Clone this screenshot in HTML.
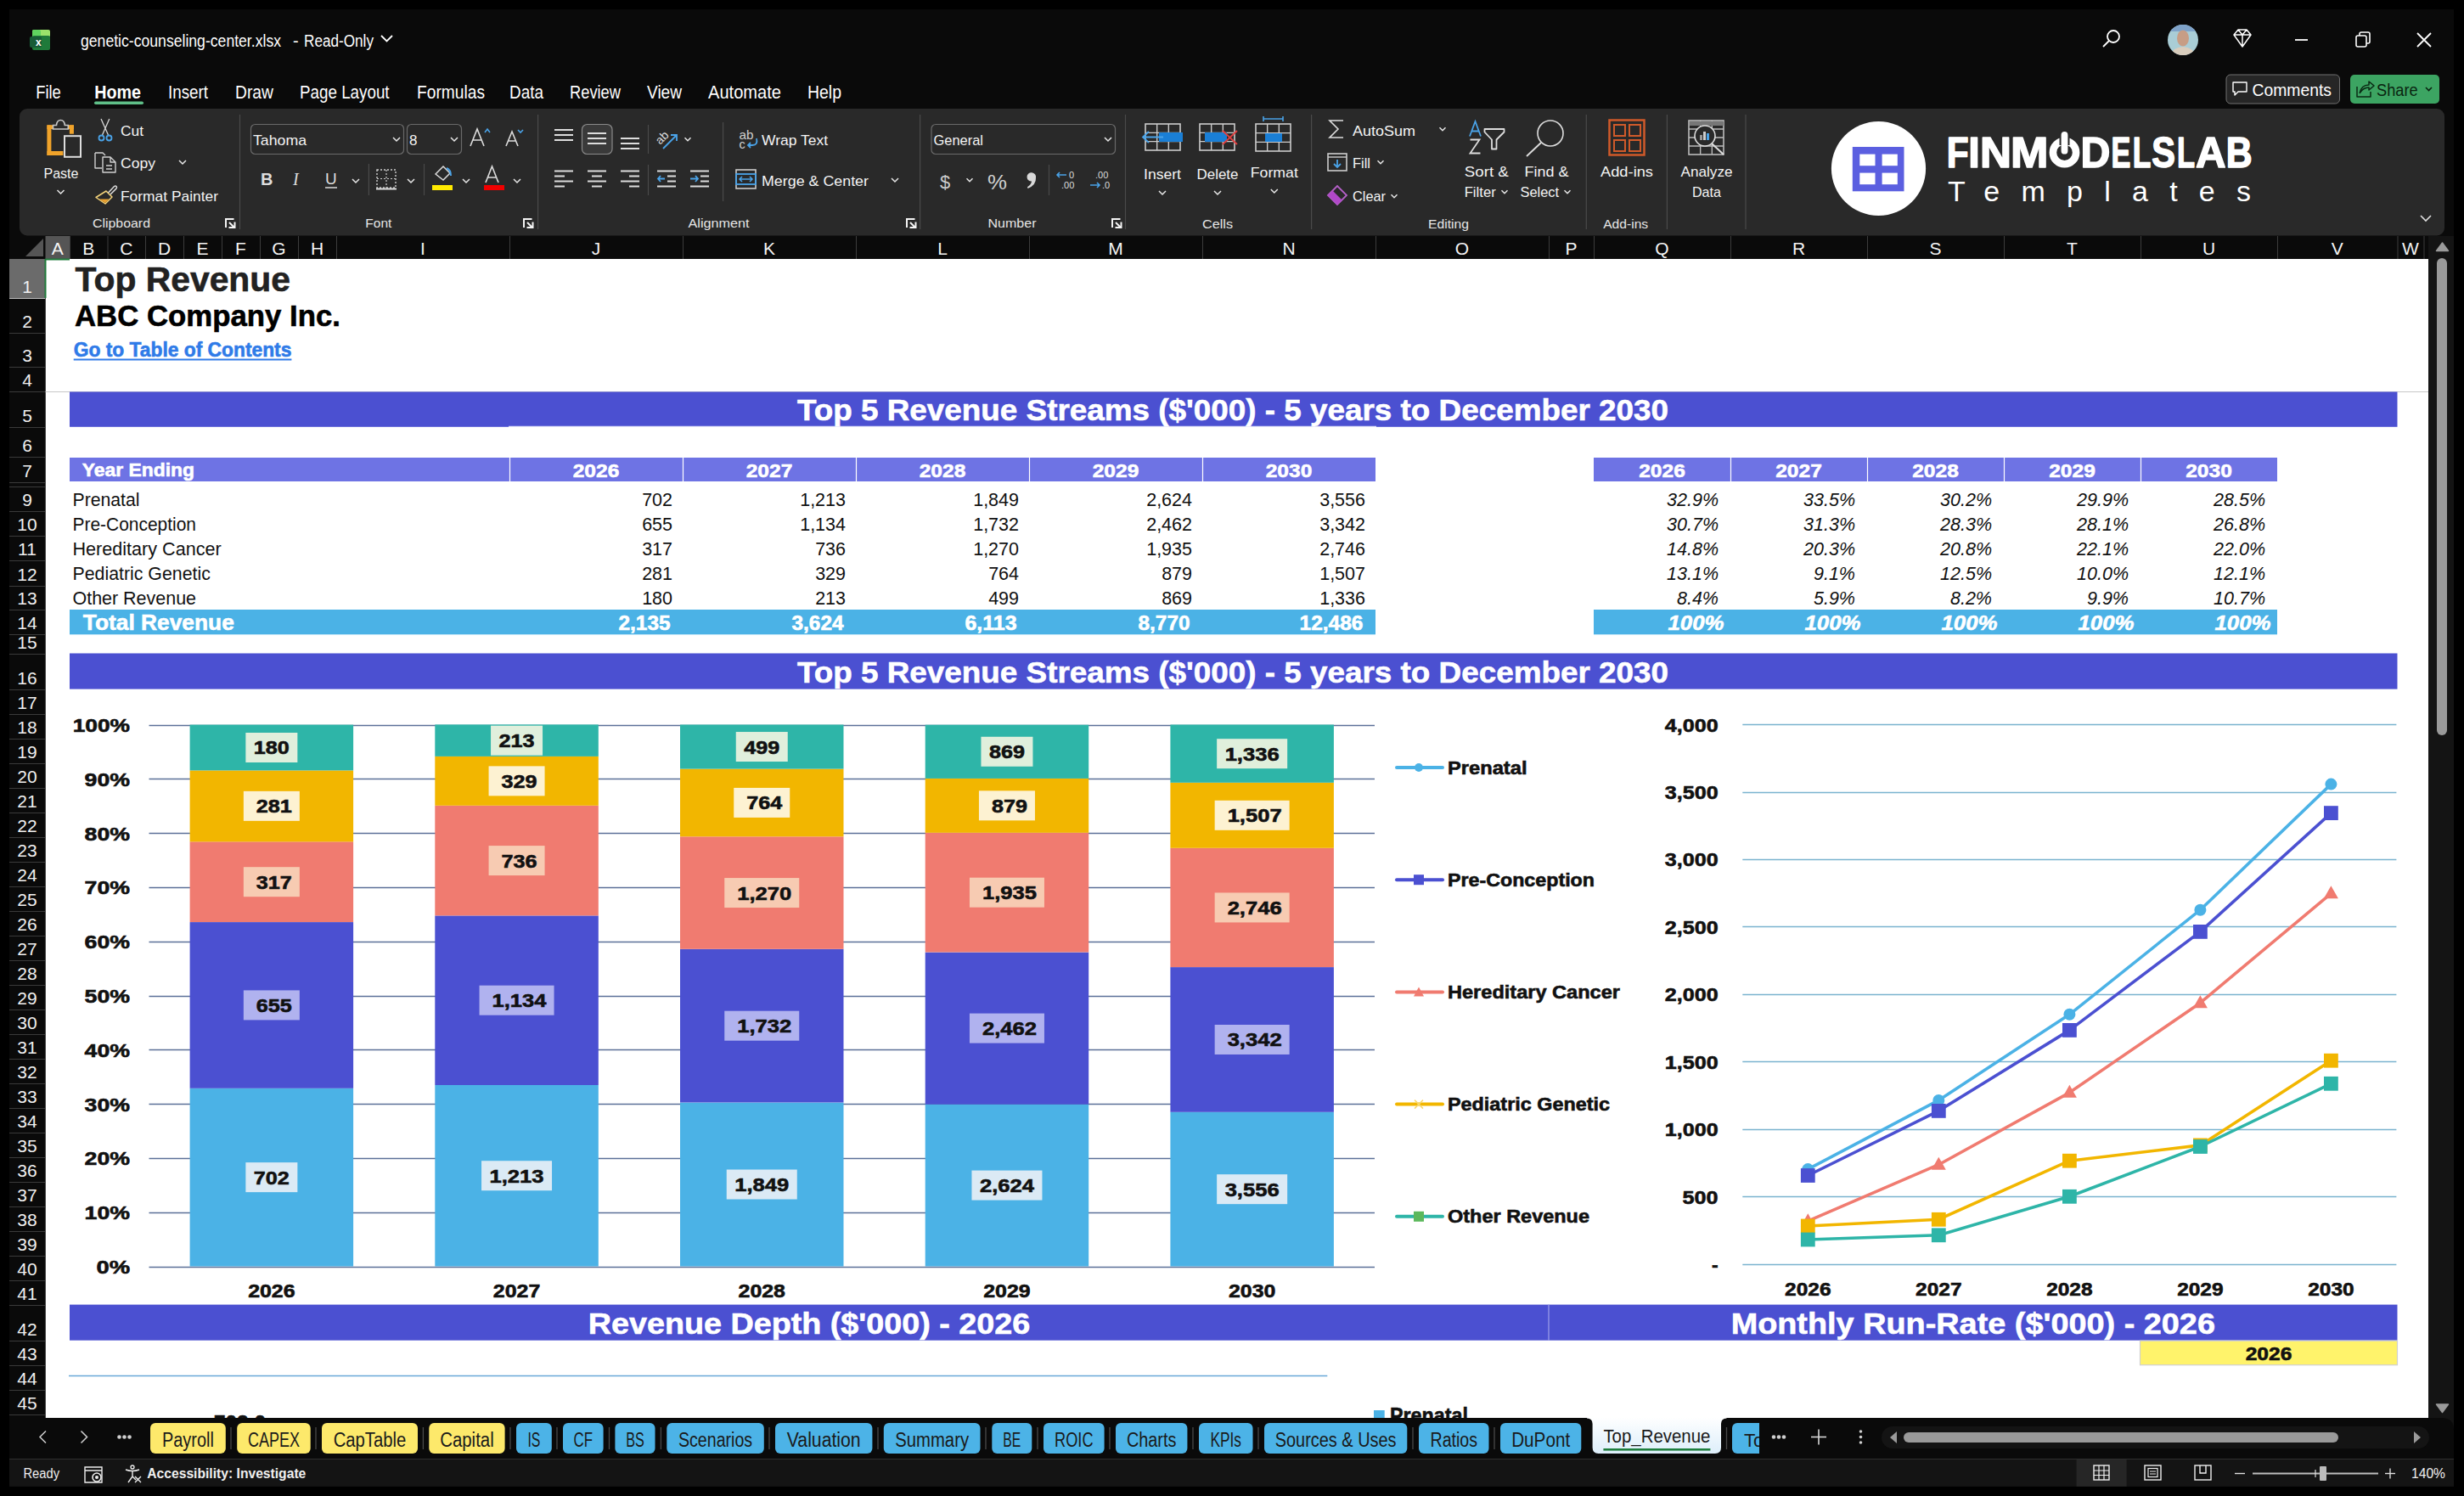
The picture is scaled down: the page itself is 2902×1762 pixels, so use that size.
<!DOCTYPE html>
<html><head><meta charset="utf-8"><style>
html,body{margin:0;padding:0;background:#000;width:2902px;height:1762px;overflow:hidden}
svg{display:block;font-family:"Liberation Sans",sans-serif}
</style></head><body>
<svg width="2902" height="1762" viewBox="0 0 2902 1762">
<rect x="0" y="0" width="2902" height="1762" fill="#000"/>
<rect x="11" y="11" width="2879" height="1740" fill="#0a0a0a"/>
<g>
<rect x="38" y="35" width="21" height="9" fill="#9be36b" rx="2"/>
<rect x="38" y="35" width="10" height="9" fill="#5fd35f" rx="2"/>
<rect x="38" y="42" width="21" height="17" fill="#1f7a3a" rx="2"/>
<rect x="35" y="43" width="14" height="13" fill="#185c37" rx="2"/>
<text x="42" y="54" font-size="12" fill="#fff" font-weight="bold">x</text>
</g>
<text x="95" y="55" font-size="20" fill="#fff" textLength="236" lengthAdjust="spacingAndGlyphs">genetic-counseling-center.xlsx</text>
<text x="345" y="55" font-size="20" fill="#fff">-</text>
<text x="358" y="55" font-size="20" fill="#fff" textLength="82" lengthAdjust="spacingAndGlyphs">Read-Only</text>
<path d="M449 42 L455.5 48.5 L462 42" fill="none" stroke="#fff" stroke-width="1.8"/>
<circle cx="2489" cy="43" r="7" fill="none" stroke="#fff" stroke-width="1.8"/><line x1="2484" y1="48" x2="2477" y2="55" stroke="#fff" stroke-width="1.8"/>
<clipPath id="av"><circle cx="2571" cy="47" r="18"/></clipPath><g clip-path="url(#av)"><rect x="2553" y="29" width="36" height="36" fill="#a9cdd6"/><rect x="2553" y="29" width="36" height="8" fill="#7fa3c9"/><ellipse cx="2571" cy="45" rx="7" ry="9.5" fill="#c79d85"/><path d="M2556 66 Q2558 56 2571 55 Q2584 56 2586 66 Z" fill="#d9cdbd"/></g>
<path d="M2631 41 L2636 35 L2646 35 L2651 41 L2641 55 Z M2631 41 L2651 41 M2636 35 L2641 41 L2646 35 M2641 41 L2641 55" fill="none" stroke="#fff" stroke-width="1.5" stroke-linejoin="round"/>
<line x1="2703" y1="47" x2="2718" y2="47" stroke="#fff" stroke-width="1.8"/>
<rect x="2775" y="42" width="12" height="13" rx="2" fill="none" stroke="#fff" stroke-width="1.6"/><path d="M2779 42 L2779 40 Q2779 38 2781 38 L2789 38 Q2791 38 2791 40 L2791 49 Q2791 51 2789 51 L2787 51" fill="none" stroke="#fff" stroke-width="1.6"/>
<path d="M2847 39 L2863 55 M2863 39 L2847 55" stroke="#fff" stroke-width="1.8"/>
<text x="42.2" y="115.5" font-size="22" fill="#fff" textLength="29.6" lengthAdjust="spacingAndGlyphs">File</text>
<text x="111.2" y="115.5" font-size="22" fill="#fff" font-weight="bold" textLength="54.8" lengthAdjust="spacingAndGlyphs">Home</text>
<text x="198" y="115.5" font-size="22" fill="#fff" textLength="47" lengthAdjust="spacingAndGlyphs">Insert</text>
<text x="277" y="115.5" font-size="22" fill="#fff" textLength="45" lengthAdjust="spacingAndGlyphs">Draw</text>
<text x="353" y="115.5" font-size="22" fill="#fff" textLength="105.6" lengthAdjust="spacingAndGlyphs">Page Layout</text>
<text x="491" y="115.5" font-size="22" fill="#fff" textLength="80" lengthAdjust="spacingAndGlyphs">Formulas</text>
<text x="600" y="115.5" font-size="22" fill="#fff" textLength="40" lengthAdjust="spacingAndGlyphs">Data</text>
<text x="671" y="115.5" font-size="22" fill="#fff" textLength="60" lengthAdjust="spacingAndGlyphs">Review</text>
<text x="762" y="115.5" font-size="22" fill="#fff" textLength="41" lengthAdjust="spacingAndGlyphs">View</text>
<text x="834" y="115.5" font-size="22" fill="#fff" textLength="86" lengthAdjust="spacingAndGlyphs">Automate</text>
<text x="951" y="115.5" font-size="22" fill="#fff" textLength="40" lengthAdjust="spacingAndGlyphs">Help</text>
<rect x="111" y="119.5" width="58" height="3.5" fill="#5fbf88" rx="1.7"/>
<rect x="2622" y="88" width="133.5" height="34" rx="5" fill="#262626" stroke="#707070" stroke-width="1"/>
<path d="M2630 97 L2646 97 L2646 108 L2636 108 L2632 112 L2632 108 L2630 108 Z" fill="none" stroke="#fff" stroke-width="1.4" stroke-linejoin="round"/>
<text x="2652.5" y="112.5" font-size="21" fill="#fff" textLength="93.5" lengthAdjust="spacingAndGlyphs">Comments</text>
<rect x="2768" y="88" width="105" height="34" rx="5" fill="#3ca462"/>
<path d="M2776 102 L2776 114 L2792 114 L2792 108 M2779 110 Q2781 100 2790 100 L2790 96 L2796 101 L2790 106 L2790 103 Q2783 103 2779 110" fill="none" stroke="#0a2a14" stroke-width="1.5" stroke-linejoin="round"/>
<text x="2799" y="113" font-size="21" fill="#0a2410" textLength="48.6" lengthAdjust="spacingAndGlyphs">Share</text>
<path d="M2857 103 L2860.5 106.5 L2864 103" fill="none" stroke="#0a2410" stroke-width="1.6"/>
<rect x="23" y="128" width="2856" height="149.5" fill="#292929" rx="9"/>
<line x1="282.5" y1="135" x2="282.5" y2="270" stroke="#4a4a4a" stroke-width="1.2"/>
<line x1="633.6" y1="135" x2="633.6" y2="270" stroke="#4a4a4a" stroke-width="1.2"/>
<line x1="1083.6" y1="135" x2="1083.6" y2="270" stroke="#4a4a4a" stroke-width="1.2"/>
<line x1="1325.5" y1="135" x2="1325.5" y2="270" stroke="#4a4a4a" stroke-width="1.2"/>
<line x1="1544.6" y1="135" x2="1544.6" y2="270" stroke="#4a4a4a" stroke-width="1.2"/>
<line x1="1868.3" y1="135" x2="1868.3" y2="270" stroke="#4a4a4a" stroke-width="1.2"/>
<line x1="1963.4" y1="135" x2="1963.4" y2="270" stroke="#4a4a4a" stroke-width="1.2"/>
<line x1="2056" y1="135" x2="2056" y2="270" stroke="#4a4a4a" stroke-width="1.2"/>
<rect x="55.4" y="147.3" width="5" height="35.7" fill="#f0a32a"/>
<rect x="55.4" y="178" width="19" height="5" fill="#f0a32a"/>
<rect x="55.4" y="147.3" width="7" height="4.7" fill="#f0a32a"/>
<rect x="81.9" y="147.3" width="5" height="10.4" fill="#f0a32a"/>
<rect x="79" y="147.3" width="8" height="4.7" fill="#f0a32a"/>
<path d="M62.5 152 L62.5 147.5 L66.5 147.5 Q67 141.5 71.4 141.5 Q75.8 141.5 76.3 147.5 L80.3 147.5 L80.3 152 Z" fill="#292929" stroke="#c8c8c8" stroke-width="1.6"/>
<rect x="76" y="160.2" width="19" height="24.6" fill="#292929" stroke="#dedede" stroke-width="2"/>
<text x="72" y="210" font-size="17" fill="#f4f4f4" text-anchor="middle" textLength="41" lengthAdjust="spacingAndGlyphs">Paste</text>
<path d="M67.5 224.0 L71.5 228.0 L75.5 224.0" fill="none" stroke="#e8e8e8" stroke-width="1.5"/>
<path d="M119 140 L127.5 159 M128.8 140 L120.5 159" stroke="#d8d8d8" stroke-width="1.3"/><circle cx="119.5" cy="162.5" r="3" fill="none" stroke="#4aa3e8" stroke-width="1.8"/><circle cx="128.5" cy="162.5" r="3" fill="none" stroke="#4aa3e8" stroke-width="1.8"/>
<text x="142" y="159.5" font-size="17" fill="#f4f4f4" textLength="27" lengthAdjust="spacingAndGlyphs">Cut</text>
<path d="M112 180 L112 198 L120 198 M112 180 L121 180 L124 183 M121 185 L130 185 L136 191 L136 203 L121 203 Z M130 185 L130 191 L136 191 M125 195 L132 195 M125 199 L132 199" fill="none" stroke="#d0d0d0" stroke-width="1.4" stroke-linejoin="round"/>
<text x="142" y="198" font-size="17" fill="#f4f4f4" textLength="41" lengthAdjust="spacingAndGlyphs">Copy</text>
<path d="M211 189.0 L215 193.0 L219 189.0" fill="none" stroke="#e8e8e8" stroke-width="1.5"/>
<path d="M113 232.5 L125 225 L132 232 L124 240 Z" fill="#292929" stroke="#f3d27a" stroke-width="1.5" stroke-linejoin="round"/>
<path d="M116.5 234.5 L128.5 234.5 L124 239 Z" fill="#e8a030"/>
<path d="M127.5 227 L134.5 219.5 Q136 218.5 137 219.5 Q138 220.5 137 222 L130 229" fill="none" stroke="#dedede" stroke-width="1.5"/>
<text x="142" y="237" font-size="17" fill="#f4f4f4" textLength="115" lengthAdjust="spacingAndGlyphs">Format Painter</text>
<text x="109" y="267.5" font-size="15.5" fill="#e6e6e6" textLength="68" lengthAdjust="spacingAndGlyphs">Clipboard</text>
<path d="M266 268 L266 258 L275.5 258 M270 262 L275.5 267.5 M276.5 261.5 L276.5 268 L269.5 268" fill="none" stroke="#f4f4f4" stroke-width="2"/>
<rect x="295.5" y="146.5" width="180" height="35" rx="5" fill="none" stroke="#6a6a6a" stroke-width="1.2"/>
<rect x="479.5" y="146.5" width="64" height="35" rx="5" fill="none" stroke="#6a6a6a" stroke-width="1.2"/>
<text x="298" y="171" font-size="17" fill="#f4f4f4" textLength="63" lengthAdjust="spacingAndGlyphs">Tahoma</text>
<path d="M463 162.0 L467 166.0 L471 162.0" fill="none" stroke="#e8e8e8" stroke-width="1.5"/>
<text x="482" y="171" font-size="17" fill="#f4f4f4">8</text>
<path d="M531 162.0 L535 166.0 L539 162.0" fill="none" stroke="#e8e8e8" stroke-width="1.5"/>
<path d="M554 172 L562 152 L570 172 M557 165 L567 165" fill="none" stroke="#ddd" stroke-width="1.6"/><path d="M571 156 L574 152 L577 156" fill="none" stroke="#4aa3e8" stroke-width="1.6"/>
<path d="M596 172 L603 155 L610 172 M599 166 L607 166" fill="none" stroke="#ddd" stroke-width="1.6"/><path d="M610 153 L613 156 L616 153" fill="none" stroke="#4aa3e8" stroke-width="1.6"/>
<text x="307" y="218" font-size="20" fill="#ddd" font-weight="bold">B</text>
<text x="345" y="218" font-size="20" fill="#ddd" font-style="italic" font-family="Liberation Serif">I</text>
<text x="383" y="217" font-size="19" fill="#ddd">U</text>
<line x1="383" y1="221" x2="397" y2="221" stroke="#ddd" stroke-width="1.5"/>
<path d="M415 211.0 L419 215.0 L423 211.0" fill="none" stroke="#e8e8e8" stroke-width="1.5"/>
<line x1="434.4" y1="193" x2="434.4" y2="230" stroke="#4a4a4a" stroke-width="1.2"/>
<rect x="444" y="200" width="22" height="21" fill="none" stroke="#ccc" stroke-width="1.4" stroke-dasharray="2 2"/><path d="M444 210.5 L466 210.5 M455 200 L455 221" stroke="#ccc" stroke-width="1.2" stroke-dasharray="2 2"/>
<line x1="443" y1="222.5" x2="467" y2="222.5" stroke="#ddd" stroke-width="2"/>
<path d="M480 211.0 L484 215.0 L488 211.0" fill="none" stroke="#e8e8e8" stroke-width="1.5"/>
<line x1="499.5" y1="193" x2="499.5" y2="230" stroke="#4a4a4a" stroke-width="1.2"/>
<path d="M513 205 L522 196 L530 204 L522 212 Z" fill="none" stroke="#ddd" stroke-width="1.5"/><path d="M526 198 Q531 200 531 207" fill="none" stroke="#4aa3e8" stroke-width="2"/>
<rect x="509" y="218" width="24" height="6" fill="#ffea00"/>
<path d="M545 211.0 L549 215.0 L553 211.0" fill="none" stroke="#e8e8e8" stroke-width="1.5"/>
<path d="M572 215 L579.5 196 L587 215 M575 209 L584 209" fill="none" stroke="#ddd" stroke-width="1.6"/>
<rect x="570" y="218" width="24" height="6" fill="#f00000"/>
<path d="M605 211.0 L609 215.0 L613 211.0" fill="none" stroke="#e8e8e8" stroke-width="1.5"/>
<text x="445.8" y="268" font-size="15.5" fill="#e6e6e6" text-anchor="middle" textLength="31" lengthAdjust="spacingAndGlyphs">Font</text>
<path d="M617 268 L617 258 L626.5 258 M621 262 L626.5 267.5 M627.5 261.5 L627.5 268 L620.5 268" fill="none" stroke="#f4f4f4" stroke-width="2"/>
<line x1="653" y1="153" x2="675" y2="153" stroke="#ddd" stroke-width="2"/>
<line x1="653" y1="159" x2="675" y2="159" stroke="#ddd" stroke-width="2"/>
<line x1="653" y1="165" x2="675" y2="165" stroke="#ddd" stroke-width="2"/>
<rect x="685.5" y="146.5" width="35.5" height="35" rx="6" fill="#3a3a3a" stroke="#8a8a8a" stroke-width="1.2"/>
<line x1="692" y1="157" x2="714" y2="157" stroke="#ddd" stroke-width="2"/>
<line x1="692" y1="163" x2="714" y2="163" stroke="#ddd" stroke-width="2"/>
<line x1="692" y1="169" x2="714" y2="169" stroke="#ddd" stroke-width="2"/>
<line x1="731" y1="163" x2="753" y2="163" stroke="#ddd" stroke-width="2"/>
<line x1="731" y1="169" x2="753" y2="169" stroke="#ddd" stroke-width="2"/>
<line x1="731" y1="175" x2="753" y2="175" stroke="#ddd" stroke-width="2"/>
<line x1="763.5" y1="147" x2="763.5" y2="181" stroke="#4a4a4a" stroke-width="1.2"/>
<text x="0" y="0" font-size="14" fill="#ddd" transform="translate(777.5 171) rotate(-45)">ab</text>
<path d="M781 175 L797 159 M790 159 L797 159 L797 166" fill="none" stroke="#4aa3e8" stroke-width="1.8"/>
<path d="M806.5 162.25 L810 165.75 L813.5 162.25" fill="none" stroke="#e8e8e8" stroke-width="1.5"/>
<line x1="851.6" y1="144" x2="851.6" y2="237" stroke="#4a4a4a" stroke-width="1.2"/>
<line x1="653" y1="201.5" x2="675" y2="201.5" stroke="#ddd" stroke-width="2"/>
<line x1="653" y1="207.5" x2="665" y2="207.5" stroke="#ddd" stroke-width="2"/>
<line x1="653" y1="213.5" x2="675" y2="213.5" stroke="#ddd" stroke-width="2"/>
<line x1="653" y1="219.5" x2="665" y2="219.5" stroke="#ddd" stroke-width="2"/>
<line x1="692.0" y1="201.5" x2="714.0" y2="201.5" stroke="#ddd" stroke-width="2"/>
<line x1="697.0" y1="207.5" x2="709.0" y2="207.5" stroke="#ddd" stroke-width="2"/>
<line x1="692.0" y1="213.5" x2="714.0" y2="213.5" stroke="#ddd" stroke-width="2"/>
<line x1="697.0" y1="219.5" x2="709.0" y2="219.5" stroke="#ddd" stroke-width="2"/>
<line x1="731" y1="201.5" x2="753" y2="201.5" stroke="#ddd" stroke-width="2"/>
<line x1="741" y1="207.5" x2="753" y2="207.5" stroke="#ddd" stroke-width="2"/>
<line x1="731" y1="213.5" x2="753" y2="213.5" stroke="#ddd" stroke-width="2"/>
<line x1="741" y1="219.5" x2="753" y2="219.5" stroke="#ddd" stroke-width="2"/>
<line x1="763.5" y1="194" x2="763.5" y2="230" stroke="#4a4a4a" stroke-width="1.2"/>
<line x1="774" y1="201.5" x2="796" y2="201.5" stroke="#ddd" stroke-width="2"/>
<line x1="786" y1="207.5" x2="796" y2="207.5" stroke="#ddd" stroke-width="2"/>
<line x1="786" y1="213.5" x2="796" y2="213.5" stroke="#ddd" stroke-width="2"/>
<line x1="774" y1="219.5" x2="796" y2="219.5" stroke="#ddd" stroke-width="2"/>
<path d="M783 210.5 L775 210.5 M778 207 L775 210.5 L778 214" fill="none" stroke="#4aa3e8" stroke-width="1.8"/>
<line x1="813" y1="201.5" x2="835" y2="201.5" stroke="#ddd" stroke-width="2"/>
<line x1="825" y1="207.5" x2="835" y2="207.5" stroke="#ddd" stroke-width="2"/>
<line x1="825" y1="213.5" x2="835" y2="213.5" stroke="#ddd" stroke-width="2"/>
<line x1="813" y1="219.5" x2="835" y2="219.5" stroke="#ddd" stroke-width="2"/>
<path d="M813 210.5 L822 210.5 M819 207 L822 210.5 L819 214" fill="none" stroke="#4aa3e8" stroke-width="1.8"/>
<text x="870.5" y="164" font-size="14.5" fill="#d0d0d0" textLength="17" lengthAdjust="spacingAndGlyphs">ab</text>
<text x="870.5" y="174.5" font-size="14.5" fill="#d0d0d0">c</text>
<path d="M891 163 Q893 171 886 171 L881 171 M884 168 L881 171 L884 174" fill="none" stroke="#4aa3e8" stroke-width="1.8"/>
<text x="897" y="171" font-size="17" fill="#f4f4f4" textLength="78" lengthAdjust="spacingAndGlyphs">Wrap Text</text>
<rect x="867" y="200" width="23" height="22" fill="none" stroke="#ccc" stroke-width="1.6"/><rect x="867" y="205" width="23" height="12" fill="none" stroke="#4aa3e8" stroke-width="1.8"/><path d="M871 211 L886 211 M874 208 L871 211 L874 214 M883 208 L886 211 L883 214" fill="none" stroke="#4aa3e8" stroke-width="1.5"/>
<text x="897" y="218.5" font-size="17" fill="#f4f4f4" textLength="126" lengthAdjust="spacingAndGlyphs">Merge &amp; Center</text>
<path d="M1050 210.0 L1054 214.0 L1058 210.0" fill="none" stroke="#e8e8e8" stroke-width="1.5"/>
<text x="846.5" y="268" font-size="15.5" fill="#e6e6e6" text-anchor="middle" textLength="72" lengthAdjust="spacingAndGlyphs">Alignment</text>
<path d="M1068 268 L1068 258 L1077.5 258 M1072 262 L1077.5 267.5 M1078.5 261.5 L1078.5 268 L1071.5 268" fill="none" stroke="#f4f4f4" stroke-width="2"/>
<rect x="1097" y="146.5" width="216.5" height="35" rx="5" fill="none" stroke="#6a6a6a" stroke-width="1.2"/>
<text x="1099.5" y="171" font-size="17" fill="#f4f4f4" textLength="58.5" lengthAdjust="spacingAndGlyphs">General</text>
<path d="M1301 162.0 L1305 166.0 L1309 162.0" fill="none" stroke="#e8e8e8" stroke-width="1.5"/>
<text x="1107" y="222" font-size="22" fill="#ccc">$</text>
<path d="M1138.5 210.25 L1142 213.75 L1145.5 210.25" fill="none" stroke="#e8e8e8" stroke-width="1.5"/>
<text x="1163" y="223" font-size="24" fill="#d0d0d0" textLength="23" lengthAdjust="spacingAndGlyphs">%</text>
<path d="M1209.5 208.5 A5.3 5.3 0 1 1 1220 209.5 Q1220.5 218 1210.5 222 L1210 220.3 Q1214.5 217.5 1215 213.6 A5.3 5.3 0 0 1 1209.5 208.5 Z" fill="#d8d8d8"/>
<line x1="1235.5" y1="194" x2="1235.5" y2="230" stroke="#4a4a4a" stroke-width="1.2"/>
<text x="1259" y="210" font-size="11" fill="#ddd">0</text>
<text x="1250" y="222" font-size="11" fill="#ddd">.00</text>
<path d="M1256 206 L1245 206 M1248 203 L1245 206 L1248 209" fill="none" stroke="#4aa3e8" stroke-width="1.6"/>
<text x="1290" y="210" font-size="11" fill="#ddd">.00</text>
<text x="1298" y="222" font-size="11" fill="#ddd">.0</text>
<path d="M1284 218 L1295 218 M1292 215 L1295 218 L1292 221" fill="none" stroke="#4aa3e8" stroke-width="1.6"/>
<text x="1192" y="268" font-size="15.5" fill="#e6e6e6" text-anchor="middle" textLength="57" lengthAdjust="spacingAndGlyphs">Number</text>
<path d="M1310 268 L1310 258 L1319.5 258 M1314 262 L1319.5 267.5 M1320.5 261.5 L1320.5 268 L1313.5 268" fill="none" stroke="#f4f4f4" stroke-width="2"/>
<rect x="1349" y="146" width="41" height="31" fill="none" stroke="#ccc" stroke-width="1.6"/>
<line x1="1362.6666666666667" y1="146" x2="1362.6666666666667" y2="177" stroke="#ccc" stroke-width="1.4"/>
<line x1="1376.3333333333333" y1="146" x2="1376.3333333333333" y2="177" stroke="#ccc" stroke-width="1.4"/>
<line x1="1349" y1="156.33333333333334" x2="1390" y2="156.33333333333334" stroke="#ccc" stroke-width="1.4"/>
<line x1="1349" y1="166.66666666666666" x2="1390" y2="166.66666666666666" stroke="#ccc" stroke-width="1.4"/>
<rect x="1365" y="156" width="28" height="11" fill="#1a7fd6"/>
<path d="M1370 161.5 L1347 161.5 M1353 155 L1346 161.5 L1353 168" fill="none" stroke="#4aa3e8" stroke-width="1.8"/>
<text x="1369" y="210.5" font-size="17" fill="#f4f4f4" text-anchor="middle" textLength="44" lengthAdjust="spacingAndGlyphs">Insert</text>
<path d="M1365 225.0 L1369 229.0 L1373 225.0" fill="none" stroke="#e8e8e8" stroke-width="1.5"/>
<rect x="1413" y="146" width="41" height="31" fill="none" stroke="#ccc" stroke-width="1.6"/>
<line x1="1426.6666666666667" y1="146" x2="1426.6666666666667" y2="177" stroke="#ccc" stroke-width="1.4"/>
<line x1="1440.3333333333333" y1="146" x2="1440.3333333333333" y2="177" stroke="#ccc" stroke-width="1.4"/>
<line x1="1413" y1="156.33333333333334" x2="1454" y2="156.33333333333334" stroke="#ccc" stroke-width="1.4"/>
<line x1="1413" y1="166.66666666666666" x2="1454" y2="166.66666666666666" stroke="#ccc" stroke-width="1.4"/>
<rect x="1419" y="156" width="26" height="11" fill="#1a7fd6"/>
<path d="M1440 154 L1457 170 M1457 154 L1440 170" stroke="#e04040" stroke-width="1.8"/>
<text x="1434" y="210.5" font-size="17" fill="#f4f4f4" text-anchor="middle" textLength="49" lengthAdjust="spacingAndGlyphs">Delete</text>
<path d="M1430 225.0 L1434 229.0 L1438 225.0" fill="none" stroke="#e8e8e8" stroke-width="1.5"/>
<rect x="1479" y="146" width="41" height="32" fill="none" stroke="#ccc" stroke-width="1.6"/>
<line x1="1492.6666666666667" y1="146" x2="1492.6666666666667" y2="178" stroke="#ccc" stroke-width="1.4"/>
<line x1="1506.3333333333333" y1="146" x2="1506.3333333333333" y2="178" stroke="#ccc" stroke-width="1.4"/>
<line x1="1479" y1="156.66666666666666" x2="1520" y2="156.66666666666666" stroke="#ccc" stroke-width="1.4"/>
<line x1="1479" y1="167.33333333333334" x2="1520" y2="167.33333333333334" stroke="#ccc" stroke-width="1.4"/>
<rect x="1490" y="157" width="20" height="10" fill="#1a7fd6"/>
<path d="M1488 140 L1511 140 M1488 137 L1488 143 M1511 137 L1511 143" stroke="#4aa3e8" stroke-width="1.6"/>
<text x="1500.8" y="208.5" font-size="17" fill="#f4f4f4" text-anchor="middle" textLength="56" lengthAdjust="spacingAndGlyphs">Format</text>
<path d="M1496.8 223.0 L1500.8 227.0 L1504.8 223.0" fill="none" stroke="#e8e8e8" stroke-width="1.5"/>
<text x="1434" y="268.5" font-size="15.5" fill="#e6e6e6" text-anchor="middle" textLength="36" lengthAdjust="spacingAndGlyphs">Cells</text>
<path d="M1582 142 L1566 142 L1576 152 L1566 162 L1582 162" fill="none" stroke="#ddd" stroke-width="1.6"/>
<text x="1593" y="159.5" font-size="17" fill="#f4f4f4" textLength="74" lengthAdjust="spacingAndGlyphs">AutoSum</text>
<path d="M1695.5 150.25 L1699 153.75 L1702.5 150.25" fill="none" stroke="#e8e8e8" stroke-width="1.5"/>
<rect x="1564" y="181" width="22" height="20" fill="none" stroke="#ccc" stroke-width="1.6"/><path d="M1564 185 L1586 185" stroke="#ccc" stroke-width="1.4"/><path d="M1575 188 L1575 197 M1571 193 L1575 197 L1579 193" fill="none" stroke="#4aa3e8" stroke-width="1.8"/>
<text x="1593" y="197.5" font-size="17" fill="#f4f4f4" textLength="21" lengthAdjust="spacingAndGlyphs">Fill</text>
<path d="M1622.5 189.25 L1626 192.75 L1629.5 189.25" fill="none" stroke="#e8e8e8" stroke-width="1.5"/>
<path d="M1564 230 L1575 219 L1586 230 L1575 241 Z" fill="none" stroke="#b560c8" stroke-width="1.8"/><path d="M1564 230 L1569.5 224.5 L1580.5 235.5 L1575 241 Z" fill="#b048c8"/>
<text x="1593" y="237" font-size="17" fill="#f4f4f4" textLength="39" lengthAdjust="spacingAndGlyphs">Clear</text>
<path d="M1638.5 229.25 L1642 232.75 L1645.5 229.25" fill="none" stroke="#e8e8e8" stroke-width="1.5"/>
<path d="M1731 160.5 L1737.5 143 L1744 160.5 M1733.5 154.5 L1741.5 154.5" fill="none" stroke="#4aa3e8" stroke-width="1.8"/>
<path d="M1731.5 164.5 L1742.5 164.5 L1731.5 180.5 L1743.5 180.5" fill="none" stroke="#ddd" stroke-width="1.8"/>
<path d="M1748.5 152 L1771.5 152 L1771.5 155.5 L1762.5 164.5 L1762.5 175.5 L1757 175.5 L1757 164.5 L1748.5 155.5 Z" fill="none" stroke="#ddd" stroke-width="1.8" stroke-linejoin="round"/>
<text x="1750.8" y="208" font-size="17" fill="#f4f4f4" text-anchor="middle" textLength="52" lengthAdjust="spacingAndGlyphs">Sort &amp;</text>
<text x="1724.7" y="232" font-size="17" fill="#f4f4f4" textLength="37" lengthAdjust="spacingAndGlyphs">Filter</text>
<path d="M1768.5 224.25 L1772 227.75 L1775.5 224.25" fill="none" stroke="#e8e8e8" stroke-width="1.5"/>
<circle cx="1826" cy="157" r="15" fill="none" stroke="#ddd" stroke-width="1.6"/><path d="M1815 168 L1798 184" stroke="#ddd" stroke-width="1.8"/>
<text x="1821.6" y="208" font-size="17" fill="#f4f4f4" text-anchor="middle" textLength="52" lengthAdjust="spacingAndGlyphs">Find &amp;</text>
<text x="1790.5" y="232" font-size="17" fill="#f4f4f4" textLength="45.5" lengthAdjust="spacingAndGlyphs">Select</text>
<path d="M1842.5 224.25 L1846 227.75 L1849.5 224.25" fill="none" stroke="#e8e8e8" stroke-width="1.5"/>
<text x="1706" y="268.5" font-size="15.5" fill="#e6e6e6" text-anchor="middle" textLength="48" lengthAdjust="spacingAndGlyphs">Editing</text>
<rect x="1895.5" y="141.5" width="41" height="41" fill="none" stroke="#d05a2a" stroke-width="2.5"/>
<rect x="1901" y="147" width="13" height="13" fill="none" stroke="#d05a2a" stroke-width="2"/>
<rect x="1919" y="147" width="13" height="13" fill="none" stroke="#d05a2a" stroke-width="2"/>
<rect x="1901" y="165" width="13" height="13" fill="none" stroke="#d05a2a" stroke-width="2"/>
<rect x="1919" y="165" width="13" height="13" fill="none" stroke="#d05a2a" stroke-width="2"/>
<text x="1916" y="208" font-size="17" fill="#f4f4f4" text-anchor="middle" textLength="62" lengthAdjust="spacingAndGlyphs">Add-ins</text>
<text x="1914.7" y="268.5" font-size="15.5" fill="#e6e6e6" text-anchor="middle" textLength="53" lengthAdjust="spacingAndGlyphs">Add-ins</text>
<rect x="1989" y="142" width="41" height="40" fill="none" stroke="#bbb" stroke-width="1.6"/>
<line x1="2002.6666666666667" y1="142" x2="2002.6666666666667" y2="182" stroke="#bbb" stroke-width="1.4"/>
<line x1="2016.3333333333333" y1="142" x2="2016.3333333333333" y2="182" stroke="#bbb" stroke-width="1.4"/>
<line x1="1989" y1="152.0" x2="2030" y2="152.0" stroke="#bbb" stroke-width="1.4"/>
<line x1="1989" y1="162.0" x2="2030" y2="162.0" stroke="#bbb" stroke-width="1.4"/>
<line x1="1989" y1="172.0" x2="2030" y2="172.0" stroke="#bbb" stroke-width="1.4"/>
<rect x="1990" y="143" width="40" height="5" fill="#777"/>
<circle cx="2008" cy="160" r="12" fill="#292929" stroke="#ddd" stroke-width="1.6"/><path d="M2016 169 L2030 182" stroke="#ddd" stroke-width="2"/>
<rect x="2002" y="159" width="3" height="6" fill="#999"/>
<rect x="2006" y="155" width="3" height="10" fill="#ccc"/>
<rect x="2010" y="157" width="3" height="8" fill="#4aa3e8"/>
<text x="2010" y="208" font-size="17" fill="#f4f4f4" text-anchor="middle" textLength="61" lengthAdjust="spacingAndGlyphs">Analyze</text>
<text x="2010" y="232" font-size="17" fill="#f4f4f4" text-anchor="middle" textLength="34" lengthAdjust="spacingAndGlyphs">Data</text>
<circle cx="2212.5" cy="198.5" r="55.6" fill="#fff"/>
<rect x="2181.8" y="173" width="60.7" height="52.3" fill="#5b5fe0"/>
<rect x="2190.3" y="181.6" width="18.2" height="13.6" fill="#fff"/>
<rect x="2216.6" y="181.6" width="18.2" height="13.6" fill="#fff"/>
<rect x="2190.3" y="203.6" width="18.2" height="13.6" fill="#fff"/>
<rect x="2216.6" y="203.6" width="18.2" height="13.6" fill="#fff"/>
<text transform="translate(2292.83 197.0) scale(0.4240 0.4957)" font-size="100" font-weight="bold" fill="#fff" stroke="#fff" stroke-width="3.2" stroke-linejoin="round">F</text>
<text transform="translate(2318.30 197.0) scale(0.4857 0.4957)" font-size="100" font-weight="bold" fill="#fff" stroke="#fff" stroke-width="3.2" stroke-linejoin="round">I</text>
<text transform="translate(2331.92 197.0) scale(0.5121 0.4957)" font-size="100" font-weight="bold" fill="#fff" stroke="#fff" stroke-width="3.2" stroke-linejoin="round">N</text>
<text transform="translate(2368.06 197.0) scale(0.5343 0.4957)" font-size="100" font-weight="bold" fill="#fff" stroke="#fff" stroke-width="3.2" stroke-linejoin="round">M</text>
<text transform="translate(2450.41 197.0) scale(0.4836 0.4957)" font-size="100" font-weight="bold" fill="#fff" stroke="#fff" stroke-width="3.2" stroke-linejoin="round">D</text>
<text transform="translate(2486.40 197.0) scale(0.3429 0.4957)" font-size="100" font-weight="bold" fill="#fff" stroke="#fff" stroke-width="3.2" stroke-linejoin="round">E</text>
<text transform="translate(2511.83 197.0) scale(0.3529 0.4957)" font-size="100" font-weight="bold" fill="#fff" stroke="#fff" stroke-width="3.2" stroke-linejoin="round">L</text>
<text transform="translate(2534.36 197.0) scale(0.4150 0.4957)" font-size="100" font-weight="bold" fill="#fff" stroke="#fff" stroke-width="3.2" stroke-linejoin="round">S</text>
<text transform="translate(2563.88 197.0) scale(0.3451 0.4957)" font-size="100" font-weight="bold" fill="#fff" stroke="#fff" stroke-width="3.2" stroke-linejoin="round">L</text>
<text transform="translate(2586.12 197.0) scale(0.4924 0.4957)" font-size="100" font-weight="bold" fill="#fff" stroke="#fff" stroke-width="3.2" stroke-linejoin="round">A</text>
<text transform="translate(2621.70 197.0) scale(0.4279 0.4957)" font-size="100" font-weight="bold" fill="#fff" stroke="#fff" stroke-width="3.2" stroke-linejoin="round">B</text>
<circle cx="2431.5" cy="179.7" r="13.6" fill="none" stroke="#fff" stroke-width="8.6"/>
<rect x="2425.5" y="152" width="12" height="19" fill="#292929"/>
<rect x="2427.6" y="155" width="7.8" height="26.6" rx="3.9" fill="#fff"/>
<text x="2294" y="236.5" font-size="34" fill="#fff" textLength="357" lengthAdjust="spacing">Templates</text>
<path d="M2851 254.0 L2857 260.0 L2863 254.0" fill="none" stroke="#ddd" stroke-width="1.6"/>
<rect x="11" y="278" width="2849" height="27" fill="#0a0a0a"/>
<rect x="53.5" y="278" width="28.5" height="27" fill="#555"/>
<path d="M30 302 L51 302 L51 281 Z" fill="#555"/>
<text x="67.75" y="300" font-size="21" fill="#f4f4f4" text-anchor="middle">A</text>
<line x1="82.5" y1="278" x2="82.5" y2="305" stroke="#3c3c3c" stroke-width="1"/>
<text x="104.25" y="300" font-size="21" fill="#f4f4f4" text-anchor="middle">B</text>
<line x1="127.0" y1="278" x2="127.0" y2="305" stroke="#3c3c3c" stroke-width="1"/>
<text x="148.75" y="300" font-size="21" fill="#f4f4f4" text-anchor="middle">C</text>
<line x1="171.5" y1="278" x2="171.5" y2="305" stroke="#3c3c3c" stroke-width="1"/>
<text x="193.5" y="300" font-size="21" fill="#f4f4f4" text-anchor="middle">D</text>
<line x1="216.5" y1="278" x2="216.5" y2="305" stroke="#3c3c3c" stroke-width="1"/>
<text x="238.5" y="300" font-size="21" fill="#f4f4f4" text-anchor="middle">E</text>
<line x1="261.5" y1="278" x2="261.5" y2="305" stroke="#3c3c3c" stroke-width="1"/>
<text x="283.5" y="300" font-size="21" fill="#f4f4f4" text-anchor="middle">F</text>
<line x1="306.5" y1="278" x2="306.5" y2="305" stroke="#3c3c3c" stroke-width="1"/>
<text x="328.5" y="300" font-size="21" fill="#f4f4f4" text-anchor="middle">G</text>
<line x1="351.5" y1="278" x2="351.5" y2="305" stroke="#3c3c3c" stroke-width="1"/>
<text x="373.5" y="300" font-size="21" fill="#f4f4f4" text-anchor="middle">H</text>
<line x1="396.5" y1="278" x2="396.5" y2="305" stroke="#3c3c3c" stroke-width="1"/>
<text x="498.0" y="300" font-size="21" fill="#f4f4f4" text-anchor="middle">I</text>
<line x1="600.5" y1="278" x2="600.5" y2="305" stroke="#3c3c3c" stroke-width="1"/>
<text x="702.0" y="300" font-size="21" fill="#f4f4f4" text-anchor="middle">J</text>
<line x1="804.5" y1="278" x2="804.5" y2="305" stroke="#3c3c3c" stroke-width="1"/>
<text x="906.0" y="300" font-size="21" fill="#f4f4f4" text-anchor="middle">K</text>
<line x1="1008.5" y1="278" x2="1008.5" y2="305" stroke="#3c3c3c" stroke-width="1"/>
<text x="1110.0" y="300" font-size="21" fill="#f4f4f4" text-anchor="middle">L</text>
<line x1="1212.5" y1="278" x2="1212.5" y2="305" stroke="#3c3c3c" stroke-width="1"/>
<text x="1314.0" y="300" font-size="21" fill="#f4f4f4" text-anchor="middle">M</text>
<line x1="1416.5" y1="278" x2="1416.5" y2="305" stroke="#3c3c3c" stroke-width="1"/>
<text x="1518.0" y="300" font-size="21" fill="#f4f4f4" text-anchor="middle">N</text>
<line x1="1620.5" y1="278" x2="1620.5" y2="305" stroke="#3c3c3c" stroke-width="1"/>
<text x="1722.0" y="300" font-size="21" fill="#f4f4f4" text-anchor="middle">O</text>
<line x1="1824.5" y1="278" x2="1824.5" y2="305" stroke="#3c3c3c" stroke-width="1"/>
<text x="1850.5" y="300" font-size="21" fill="#f4f4f4" text-anchor="middle">P</text>
<line x1="1877.5" y1="278" x2="1877.5" y2="305" stroke="#3c3c3c" stroke-width="1"/>
<text x="1957.5" y="300" font-size="21" fill="#f4f4f4" text-anchor="middle">Q</text>
<line x1="2038.5" y1="278" x2="2038.5" y2="305" stroke="#3c3c3c" stroke-width="1"/>
<text x="2118.5" y="300" font-size="21" fill="#f4f4f4" text-anchor="middle">R</text>
<line x1="2199.5" y1="278" x2="2199.5" y2="305" stroke="#3c3c3c" stroke-width="1"/>
<text x="2279.5" y="300" font-size="21" fill="#f4f4f4" text-anchor="middle">S</text>
<line x1="2360.5" y1="278" x2="2360.5" y2="305" stroke="#3c3c3c" stroke-width="1"/>
<text x="2440.5" y="300" font-size="21" fill="#f4f4f4" text-anchor="middle">T</text>
<line x1="2521.5" y1="278" x2="2521.5" y2="305" stroke="#3c3c3c" stroke-width="1"/>
<text x="2601.5" y="300" font-size="21" fill="#f4f4f4" text-anchor="middle">U</text>
<line x1="2682.5" y1="278" x2="2682.5" y2="305" stroke="#3c3c3c" stroke-width="1"/>
<text x="2752.75" y="300" font-size="21" fill="#f4f4f4" text-anchor="middle">V</text>
<line x1="2824.0" y1="278" x2="2824.0" y2="305" stroke="#3c3c3c" stroke-width="1"/>
<text x="2839.0" y="300" font-size="21" fill="#f4f4f4" text-anchor="middle">W</text>
<line x1="2855.0" y1="278" x2="2855.0" y2="305" stroke="#3c3c3c" stroke-width="1"/>
<rect x="53.5" y="305" width="2806.5" height="1365" fill="#ffffff"/>
<rect x="11" y="305" width="42.5" height="1365" fill="#0a0a0a"/>
<rect x="11" y="305" width="42.5" height="46" fill="#6b6b6b"/>
<line x1="11" y1="351.5" x2="53" y2="351.5" stroke="#3a3a3a" stroke-width="1"/>
<text x="32" y="345" font-size="21" fill="#f0f0f0" text-anchor="middle">1</text>
<line x1="11" y1="392.5" x2="53" y2="392.5" stroke="#3a3a3a" stroke-width="1"/>
<text x="32" y="385.5" font-size="21" fill="#f0f0f0" text-anchor="middle">2</text>
<line x1="11" y1="432.5" x2="53" y2="432.5" stroke="#3a3a3a" stroke-width="1"/>
<text x="32" y="426" font-size="21" fill="#f0f0f0" text-anchor="middle">3</text>
<line x1="11" y1="461.5" x2="53" y2="461.5" stroke="#3a3a3a" stroke-width="1"/>
<text x="32" y="455.3" font-size="21" fill="#f0f0f0" text-anchor="middle">4</text>
<line x1="11" y1="503.5" x2="53" y2="503.5" stroke="#3a3a3a" stroke-width="1"/>
<text x="32" y="496.8" font-size="21" fill="#f0f0f0" text-anchor="middle">5</text>
<line x1="11" y1="538.5" x2="53" y2="538.5" stroke="#3a3a3a" stroke-width="1"/>
<text x="32" y="532" font-size="21" fill="#f0f0f0" text-anchor="middle">6</text>
<line x1="11" y1="568.5" x2="53" y2="568.5" stroke="#3a3a3a" stroke-width="1"/>
<text x="32" y="561.6" font-size="21" fill="#f0f0f0" text-anchor="middle">7</text>
<line x1="11" y1="573.5" x2="53" y2="573.5" stroke="#3a3a3a" stroke-width="1"/>
<line x1="11" y1="602.5" x2="53" y2="602.5" stroke="#3a3a3a" stroke-width="1"/>
<text x="32" y="596.2" font-size="21" fill="#f0f0f0" text-anchor="middle">9</text>
<line x1="11" y1="631.5" x2="53" y2="631.5" stroke="#3a3a3a" stroke-width="1"/>
<text x="32" y="625.4" font-size="21" fill="#f0f0f0" text-anchor="middle">10</text>
<line x1="11" y1="660.5" x2="53" y2="660.5" stroke="#3a3a3a" stroke-width="1"/>
<text x="32" y="654.3" font-size="21" fill="#f0f0f0" text-anchor="middle">11</text>
<line x1="11" y1="690.5" x2="53" y2="690.5" stroke="#3a3a3a" stroke-width="1"/>
<text x="32" y="683.5" font-size="21" fill="#f0f0f0" text-anchor="middle">12</text>
<line x1="11" y1="718.5" x2="53" y2="718.5" stroke="#3a3a3a" stroke-width="1"/>
<text x="32" y="712" font-size="21" fill="#f0f0f0" text-anchor="middle">13</text>
<line x1="11" y1="747.5" x2="53" y2="747.5" stroke="#3a3a3a" stroke-width="1"/>
<text x="32" y="741.3" font-size="21" fill="#f0f0f0" text-anchor="middle">14</text>
<line x1="11" y1="770.5" x2="53" y2="770.5" stroke="#3a3a3a" stroke-width="1"/>
<text x="32" y="763.5" font-size="21" fill="#f0f0f0" text-anchor="middle">15</text>
<line x1="11" y1="812.5" x2="53" y2="812.5" stroke="#3a3a3a" stroke-width="1"/>
<text x="32" y="805.6" font-size="21" fill="#f0f0f0" text-anchor="middle">16</text>
<line x1="11" y1="841.5" x2="53" y2="841.5" stroke="#3a3a3a" stroke-width="1"/>
<text x="32" y="834.6" font-size="21" fill="#f0f0f0" text-anchor="middle">17</text>
<line x1="11" y1="870.5" x2="53" y2="870.5" stroke="#3a3a3a" stroke-width="1"/>
<text x="32" y="863.6" font-size="21" fill="#f0f0f0" text-anchor="middle">18</text>
<line x1="11" y1="899.5" x2="53" y2="899.5" stroke="#3a3a3a" stroke-width="1"/>
<text x="32" y="892.6" font-size="21" fill="#f0f0f0" text-anchor="middle">19</text>
<line x1="11" y1="928.5" x2="53" y2="928.5" stroke="#3a3a3a" stroke-width="1"/>
<text x="32" y="921.6" font-size="21" fill="#f0f0f0" text-anchor="middle">20</text>
<line x1="11" y1="957.5" x2="53" y2="957.5" stroke="#3a3a3a" stroke-width="1"/>
<text x="32" y="950.6" font-size="21" fill="#f0f0f0" text-anchor="middle">21</text>
<line x1="11" y1="986.5" x2="53" y2="986.5" stroke="#3a3a3a" stroke-width="1"/>
<text x="32" y="979.6" font-size="21" fill="#f0f0f0" text-anchor="middle">22</text>
<line x1="11" y1="1015.5" x2="53" y2="1015.5" stroke="#3a3a3a" stroke-width="1"/>
<text x="32" y="1008.6" font-size="21" fill="#f0f0f0" text-anchor="middle">23</text>
<line x1="11" y1="1044.5" x2="53" y2="1044.5" stroke="#3a3a3a" stroke-width="1"/>
<text x="32" y="1037.6" font-size="21" fill="#f0f0f0" text-anchor="middle">24</text>
<line x1="11" y1="1073.5" x2="53" y2="1073.5" stroke="#3a3a3a" stroke-width="1"/>
<text x="32" y="1066.6" font-size="21" fill="#f0f0f0" text-anchor="middle">25</text>
<line x1="11" y1="1102.5" x2="53" y2="1102.5" stroke="#3a3a3a" stroke-width="1"/>
<text x="32" y="1095.6" font-size="21" fill="#f0f0f0" text-anchor="middle">26</text>
<line x1="11" y1="1131.5" x2="53" y2="1131.5" stroke="#3a3a3a" stroke-width="1"/>
<text x="32" y="1124.6" font-size="21" fill="#f0f0f0" text-anchor="middle">27</text>
<line x1="11" y1="1160.5" x2="53" y2="1160.5" stroke="#3a3a3a" stroke-width="1"/>
<text x="32" y="1153.6" font-size="21" fill="#f0f0f0" text-anchor="middle">28</text>
<line x1="11" y1="1189.5" x2="53" y2="1189.5" stroke="#3a3a3a" stroke-width="1"/>
<text x="32" y="1182.6" font-size="21" fill="#f0f0f0" text-anchor="middle">29</text>
<line x1="11" y1="1218.5" x2="53" y2="1218.5" stroke="#3a3a3a" stroke-width="1"/>
<text x="32" y="1211.6" font-size="21" fill="#f0f0f0" text-anchor="middle">30</text>
<line x1="11" y1="1247.5" x2="53" y2="1247.5" stroke="#3a3a3a" stroke-width="1"/>
<text x="32" y="1240.6" font-size="21" fill="#f0f0f0" text-anchor="middle">31</text>
<line x1="11" y1="1276.5" x2="53" y2="1276.5" stroke="#3a3a3a" stroke-width="1"/>
<text x="32" y="1269.6" font-size="21" fill="#f0f0f0" text-anchor="middle">32</text>
<line x1="11" y1="1305.5" x2="53" y2="1305.5" stroke="#3a3a3a" stroke-width="1"/>
<text x="32" y="1298.6" font-size="21" fill="#f0f0f0" text-anchor="middle">33</text>
<line x1="11" y1="1334.5" x2="53" y2="1334.5" stroke="#3a3a3a" stroke-width="1"/>
<text x="32" y="1327.6" font-size="21" fill="#f0f0f0" text-anchor="middle">34</text>
<line x1="11" y1="1363.5" x2="53" y2="1363.5" stroke="#3a3a3a" stroke-width="1"/>
<text x="32" y="1356.6" font-size="21" fill="#f0f0f0" text-anchor="middle">35</text>
<line x1="11" y1="1392.5" x2="53" y2="1392.5" stroke="#3a3a3a" stroke-width="1"/>
<text x="32" y="1385.6" font-size="21" fill="#f0f0f0" text-anchor="middle">36</text>
<line x1="11" y1="1421.5" x2="53" y2="1421.5" stroke="#3a3a3a" stroke-width="1"/>
<text x="32" y="1414.6" font-size="21" fill="#f0f0f0" text-anchor="middle">37</text>
<line x1="11" y1="1450.5" x2="53" y2="1450.5" stroke="#3a3a3a" stroke-width="1"/>
<text x="32" y="1443.6" font-size="21" fill="#f0f0f0" text-anchor="middle">38</text>
<line x1="11" y1="1479.5" x2="53" y2="1479.5" stroke="#3a3a3a" stroke-width="1"/>
<text x="32" y="1472.6" font-size="21" fill="#f0f0f0" text-anchor="middle">39</text>
<line x1="11" y1="1508.5" x2="53" y2="1508.5" stroke="#3a3a3a" stroke-width="1"/>
<text x="32" y="1501.6" font-size="21" fill="#f0f0f0" text-anchor="middle">40</text>
<line x1="11" y1="1537.5" x2="53" y2="1537.5" stroke="#3a3a3a" stroke-width="1"/>
<text x="32" y="1530.6" font-size="21" fill="#f0f0f0" text-anchor="middle">41</text>
<line x1="11" y1="1579.5" x2="53" y2="1579.5" stroke="#3a3a3a" stroke-width="1"/>
<text x="32" y="1572.7" font-size="21" fill="#f0f0f0" text-anchor="middle">42</text>
<line x1="11" y1="1608.5" x2="53" y2="1608.5" stroke="#3a3a3a" stroke-width="1"/>
<text x="32" y="1601.7" font-size="21" fill="#f0f0f0" text-anchor="middle">43</text>
<line x1="11" y1="1637.5" x2="53" y2="1637.5" stroke="#3a3a3a" stroke-width="1"/>
<text x="32" y="1631" font-size="21" fill="#f0f0f0" text-anchor="middle">44</text>
<line x1="11" y1="1666.5" x2="53" y2="1666.5" stroke="#3a3a3a" stroke-width="1"/>
<text x="32" y="1660.3" font-size="21" fill="#f0f0f0" text-anchor="middle">45</text>
<line x1="11" y1="351.5" x2="53" y2="351.5" stroke="#bdbdbd" stroke-width="1"/>
<line x1="53.5" y1="305" x2="53.5" y2="351" stroke="#1f7a3a" stroke-width="2"/>
<line x1="53.5" y1="305.5" x2="82" y2="305.5" stroke="#1f7a3a" stroke-width="2"/>
<line x1="53.5" y1="461.5" x2="2860" y2="461.5" stroke="#c8c8c8" stroke-width="1"/>
<text x="88.5" y="343" font-size="40" fill="#222222" font-weight="bold" stroke="#222222" stroke-width="0.6" textLength="253.5" lengthAdjust="spacingAndGlyphs">Top Revenue</text>
<text x="88" y="383.6" font-size="35" fill="#000000" font-weight="bold" stroke="#000000" stroke-width="0.6" textLength="313" lengthAdjust="spacingAndGlyphs">ABC Company Inc.</text>
<text x="86.7" y="420" font-size="23" fill="#2f7be8" font-weight="bold" stroke="#2f7be8" stroke-width="0.6" textLength="256.7" lengthAdjust="spacingAndGlyphs">Go to Table of Contents</text>
<line x1="86.7" y1="423.5" x2="343.4" y2="423.5" stroke="#2f7be8" stroke-width="1.8"/>
<rect x="82" y="461.5" width="2741.5" height="41.3" fill="#4b50d1"/>
<text x="1452" y="495" font-size="35" fill="#fff" text-anchor="middle" font-weight="bold" stroke="#fff" stroke-width="0.6" textLength="1026" lengthAdjust="spacingAndGlyphs">Top 5 Revenue Streams ($'000) - 5 years to December 2030</text>
<line x1="599" y1="502.3" x2="1621" y2="502.3" stroke="#ffffff" stroke-width="1"/>
<rect x="82" y="539" width="1538" height="28" fill="#6e73e4"/>
<rect x="1877" y="539" width="805" height="28" fill="#6e73e4"/>
<line x1="600.5" y1="539" x2="600.5" y2="567" stroke="#ffffff" stroke-width="1.2"/>
<line x1="804.5" y1="539" x2="804.5" y2="567" stroke="#ffffff" stroke-width="1.2"/>
<line x1="1008.5" y1="539" x2="1008.5" y2="567" stroke="#ffffff" stroke-width="1.2"/>
<line x1="1212.5" y1="539" x2="1212.5" y2="567" stroke="#ffffff" stroke-width="1.2"/>
<line x1="1416.5" y1="539" x2="1416.5" y2="567" stroke="#ffffff" stroke-width="1.2"/>
<line x1="2038.5" y1="539" x2="2038.5" y2="567" stroke="#ffffff" stroke-width="1.2"/>
<line x1="2199.5" y1="539" x2="2199.5" y2="567" stroke="#ffffff" stroke-width="1.2"/>
<line x1="2360.5" y1="539" x2="2360.5" y2="567" stroke="#ffffff" stroke-width="1.2"/>
<line x1="2521.5" y1="539" x2="2521.5" y2="567" stroke="#ffffff" stroke-width="1.2"/>
<text x="96.8" y="561.3" font-size="22" fill="#fff" font-weight="bold" stroke="#fff" stroke-width="0.6" textLength="132.2" lengthAdjust="spacingAndGlyphs">Year Ending</text>
<text x="702" y="561.5" font-size="22" fill="#fff" text-anchor="middle" font-weight="bold" stroke="#fff" stroke-width="0.6" textLength="54.6" lengthAdjust="spacingAndGlyphs">2026</text>
<text x="1957.5" y="561.5" font-size="22" fill="#fff" text-anchor="middle" font-weight="bold" stroke="#fff" stroke-width="0.6" textLength="54.6" lengthAdjust="spacingAndGlyphs">2026</text>
<text x="906" y="561.5" font-size="22" fill="#fff" text-anchor="middle" font-weight="bold" stroke="#fff" stroke-width="0.6" textLength="54.6" lengthAdjust="spacingAndGlyphs">2027</text>
<text x="2118.5" y="561.5" font-size="22" fill="#fff" text-anchor="middle" font-weight="bold" stroke="#fff" stroke-width="0.6" textLength="54.6" lengthAdjust="spacingAndGlyphs">2027</text>
<text x="1110" y="561.5" font-size="22" fill="#fff" text-anchor="middle" font-weight="bold" stroke="#fff" stroke-width="0.6" textLength="54.6" lengthAdjust="spacingAndGlyphs">2028</text>
<text x="2279.5" y="561.5" font-size="22" fill="#fff" text-anchor="middle" font-weight="bold" stroke="#fff" stroke-width="0.6" textLength="54.6" lengthAdjust="spacingAndGlyphs">2028</text>
<text x="1314" y="561.5" font-size="22" fill="#fff" text-anchor="middle" font-weight="bold" stroke="#fff" stroke-width="0.6" textLength="54.6" lengthAdjust="spacingAndGlyphs">2029</text>
<text x="2440.5" y="561.5" font-size="22" fill="#fff" text-anchor="middle" font-weight="bold" stroke="#fff" stroke-width="0.6" textLength="54.6" lengthAdjust="spacingAndGlyphs">2029</text>
<text x="1518" y="561.5" font-size="22" fill="#fff" text-anchor="middle" font-weight="bold" stroke="#fff" stroke-width="0.6" textLength="54.6" lengthAdjust="spacingAndGlyphs">2030</text>
<text x="2601.5" y="561.5" font-size="22" fill="#fff" text-anchor="middle" font-weight="bold" stroke="#fff" stroke-width="0.6" textLength="54.6" lengthAdjust="spacingAndGlyphs">2030</text>
<text x="85.5" y="595.7" font-size="22" fill="#111" textLength="79" lengthAdjust="spacingAndGlyphs">Prenatal</text>
<text x="792" y="595.7" font-size="21.5" fill="#111" text-anchor="end">702</text>
<text x="2024" y="595.7" font-size="21.5" fill="#111" text-anchor="end" font-style="italic">32.9%</text>
<text x="996" y="595.7" font-size="21.5" fill="#111" text-anchor="end">1,213</text>
<text x="2185" y="595.7" font-size="21.5" fill="#111" text-anchor="end" font-style="italic">33.5%</text>
<text x="1200" y="595.7" font-size="21.5" fill="#111" text-anchor="end">1,849</text>
<text x="2346" y="595.7" font-size="21.5" fill="#111" text-anchor="end" font-style="italic">30.2%</text>
<text x="1404" y="595.7" font-size="21.5" fill="#111" text-anchor="end">2,624</text>
<text x="2507" y="595.7" font-size="21.5" fill="#111" text-anchor="end" font-style="italic">29.9%</text>
<text x="1608" y="595.7" font-size="21.5" fill="#111" text-anchor="end">3,556</text>
<text x="2668" y="595.7" font-size="21.5" fill="#111" text-anchor="end" font-style="italic">28.5%</text>
<text x="85.5" y="624.9" font-size="22" fill="#111" textLength="145.5" lengthAdjust="spacingAndGlyphs">Pre-Conception</text>
<text x="792" y="624.9" font-size="21.5" fill="#111" text-anchor="end">655</text>
<text x="2024" y="624.9" font-size="21.5" fill="#111" text-anchor="end" font-style="italic">30.7%</text>
<text x="996" y="624.9" font-size="21.5" fill="#111" text-anchor="end">1,134</text>
<text x="2185" y="624.9" font-size="21.5" fill="#111" text-anchor="end" font-style="italic">31.3%</text>
<text x="1200" y="624.9" font-size="21.5" fill="#111" text-anchor="end">1,732</text>
<text x="2346" y="624.9" font-size="21.5" fill="#111" text-anchor="end" font-style="italic">28.3%</text>
<text x="1404" y="624.9" font-size="21.5" fill="#111" text-anchor="end">2,462</text>
<text x="2507" y="624.9" font-size="21.5" fill="#111" text-anchor="end" font-style="italic">28.1%</text>
<text x="1608" y="624.9" font-size="21.5" fill="#111" text-anchor="end">3,342</text>
<text x="2668" y="624.9" font-size="21.5" fill="#111" text-anchor="end" font-style="italic">26.8%</text>
<text x="85.5" y="653.8" font-size="22" fill="#111" textLength="175.2" lengthAdjust="spacingAndGlyphs">Hereditary Cancer</text>
<text x="792" y="653.8" font-size="21.5" fill="#111" text-anchor="end">317</text>
<text x="2024" y="653.8" font-size="21.5" fill="#111" text-anchor="end" font-style="italic">14.8%</text>
<text x="996" y="653.8" font-size="21.5" fill="#111" text-anchor="end">736</text>
<text x="2185" y="653.8" font-size="21.5" fill="#111" text-anchor="end" font-style="italic">20.3%</text>
<text x="1200" y="653.8" font-size="21.5" fill="#111" text-anchor="end">1,270</text>
<text x="2346" y="653.8" font-size="21.5" fill="#111" text-anchor="end" font-style="italic">20.8%</text>
<text x="1404" y="653.8" font-size="21.5" fill="#111" text-anchor="end">1,935</text>
<text x="2507" y="653.8" font-size="21.5" fill="#111" text-anchor="end" font-style="italic">22.1%</text>
<text x="1608" y="653.8" font-size="21.5" fill="#111" text-anchor="end">2,746</text>
<text x="2668" y="653.8" font-size="21.5" fill="#111" text-anchor="end" font-style="italic">22.0%</text>
<text x="85.5" y="683.0" font-size="22" fill="#111" textLength="162.3" lengthAdjust="spacingAndGlyphs">Pediatric Genetic</text>
<text x="792" y="683.0" font-size="21.5" fill="#111" text-anchor="end">281</text>
<text x="2024" y="683.0" font-size="21.5" fill="#111" text-anchor="end" font-style="italic">13.1%</text>
<text x="996" y="683.0" font-size="21.5" fill="#111" text-anchor="end">329</text>
<text x="2185" y="683.0" font-size="21.5" fill="#111" text-anchor="end" font-style="italic">9.1%</text>
<text x="1200" y="683.0" font-size="21.5" fill="#111" text-anchor="end">764</text>
<text x="2346" y="683.0" font-size="21.5" fill="#111" text-anchor="end" font-style="italic">12.5%</text>
<text x="1404" y="683.0" font-size="21.5" fill="#111" text-anchor="end">879</text>
<text x="2507" y="683.0" font-size="21.5" fill="#111" text-anchor="end" font-style="italic">10.0%</text>
<text x="1608" y="683.0" font-size="21.5" fill="#111" text-anchor="end">1,507</text>
<text x="2668" y="683.0" font-size="21.5" fill="#111" text-anchor="end" font-style="italic">12.1%</text>
<text x="85.5" y="711.5" font-size="22" fill="#111" textLength="145.5" lengthAdjust="spacingAndGlyphs">Other Revenue</text>
<text x="792" y="711.5" font-size="21.5" fill="#111" text-anchor="end">180</text>
<text x="2024" y="711.5" font-size="21.5" fill="#111" text-anchor="end" font-style="italic">8.4%</text>
<text x="996" y="711.5" font-size="21.5" fill="#111" text-anchor="end">213</text>
<text x="2185" y="711.5" font-size="21.5" fill="#111" text-anchor="end" font-style="italic">5.9%</text>
<text x="1200" y="711.5" font-size="21.5" fill="#111" text-anchor="end">499</text>
<text x="2346" y="711.5" font-size="21.5" fill="#111" text-anchor="end" font-style="italic">8.2%</text>
<text x="1404" y="711.5" font-size="21.5" fill="#111" text-anchor="end">869</text>
<text x="2507" y="711.5" font-size="21.5" fill="#111" text-anchor="end" font-style="italic">9.9%</text>
<text x="1608" y="711.5" font-size="21.5" fill="#111" text-anchor="end">1,336</text>
<text x="2668" y="711.5" font-size="21.5" fill="#111" text-anchor="end" font-style="italic">10.7%</text>
<rect x="82" y="718" width="1538" height="29.3" fill="#4bb2e6"/>
<rect x="1877" y="718" width="805" height="29.3" fill="#4bb2e6"/>
<text x="97.8" y="742" font-size="25" fill="#fff" font-weight="bold" stroke="#fff" stroke-width="0.6" textLength="178" lengthAdjust="spacingAndGlyphs">Total Revenue</text>
<text x="789.5" y="742" font-size="23" fill="#fff" text-anchor="end" font-weight="bold" stroke="#fff" stroke-width="0.6" textLength="61" lengthAdjust="spacingAndGlyphs">2,135</text>
<text x="2030.5" y="741.5" font-size="23" fill="#fff" text-anchor="end" font-weight="bold" stroke="#fff" stroke-width="0.6" font-style="italic" textLength="66" lengthAdjust="spacingAndGlyphs">100%</text>
<text x="993.5" y="742" font-size="23" fill="#fff" text-anchor="end" font-weight="bold" stroke="#fff" stroke-width="0.6" textLength="61" lengthAdjust="spacingAndGlyphs">3,624</text>
<text x="2191.5" y="741.5" font-size="23" fill="#fff" text-anchor="end" font-weight="bold" stroke="#fff" stroke-width="0.6" font-style="italic" textLength="66" lengthAdjust="spacingAndGlyphs">100%</text>
<text x="1197.5" y="742" font-size="23" fill="#fff" text-anchor="end" font-weight="bold" stroke="#fff" stroke-width="0.6" textLength="61" lengthAdjust="spacingAndGlyphs">6,113</text>
<text x="2352.5" y="741.5" font-size="23" fill="#fff" text-anchor="end" font-weight="bold" stroke="#fff" stroke-width="0.6" font-style="italic" textLength="66" lengthAdjust="spacingAndGlyphs">100%</text>
<text x="1401.5" y="742" font-size="23" fill="#fff" text-anchor="end" font-weight="bold" stroke="#fff" stroke-width="0.6" textLength="61" lengthAdjust="spacingAndGlyphs">8,770</text>
<text x="2513.5" y="741.5" font-size="23" fill="#fff" text-anchor="end" font-weight="bold" stroke="#fff" stroke-width="0.6" font-style="italic" textLength="66" lengthAdjust="spacingAndGlyphs">100%</text>
<text x="1605.5" y="742" font-size="23" fill="#fff" text-anchor="end" font-weight="bold" stroke="#fff" stroke-width="0.6" textLength="75" lengthAdjust="spacingAndGlyphs">12,486</text>
<text x="2674.5" y="741.5" font-size="23" fill="#fff" text-anchor="end" font-weight="bold" stroke="#fff" stroke-width="0.6" font-style="italic" textLength="66" lengthAdjust="spacingAndGlyphs">100%</text>
<rect x="82" y="769.5" width="2741.5" height="42.1" fill="#4b50d1"/>
<text x="1452" y="803.5" font-size="35" fill="#fff" text-anchor="middle" font-weight="bold" stroke="#fff" stroke-width="0.6" textLength="1026" lengthAdjust="spacingAndGlyphs">Top 5 Revenue Streams ($'000) - 5 years to December 2030</text>
<line x1="175.5" y1="854.5" x2="1619" y2="854.5" stroke="#5b7098" stroke-width="1.3"/>
<line x1="175.5" y1="917.5" x2="1619" y2="917.5" stroke="#5b7098" stroke-width="1.3"/>
<line x1="175.5" y1="981.5" x2="1619" y2="981.5" stroke="#5b7098" stroke-width="1.3"/>
<line x1="175.5" y1="1045.5" x2="1619" y2="1045.5" stroke="#5b7098" stroke-width="1.3"/>
<line x1="175.5" y1="1109.5" x2="1619" y2="1109.5" stroke="#5b7098" stroke-width="1.3"/>
<line x1="175.5" y1="1173.5" x2="1619" y2="1173.5" stroke="#5b7098" stroke-width="1.3"/>
<line x1="175.5" y1="1236.5" x2="1619" y2="1236.5" stroke="#5b7098" stroke-width="1.3"/>
<line x1="175.5" y1="1300.5" x2="1619" y2="1300.5" stroke="#5b7098" stroke-width="1.3"/>
<line x1="175.5" y1="1364.5" x2="1619" y2="1364.5" stroke="#5b7098" stroke-width="1.3"/>
<line x1="175.5" y1="1428.5" x2="1619" y2="1428.5" stroke="#5b7098" stroke-width="1.3"/>
<line x1="175.5" y1="1492.5" x2="1619" y2="1492.5" stroke="#5b7098" stroke-width="1.3"/>
<rect x="223.6" y="1281.8" width="192.5" height="209.7" fill="#4bb2e6"/>
<rect x="223.6" y="1086.1" width="192.5" height="195.7" fill="#4b50d1"/>
<rect x="223.6" y="991.3" width="192.5" height="94.7" fill="#f07b70"/>
<rect x="223.6" y="907.4" width="192.5" height="84.0" fill="#f2b600"/>
<rect x="223.6" y="853.6" width="192.5" height="53.8" fill="#2eb5a8"/>
<rect x="289.35" y="1369.1274473067915" width="61" height="35" fill="#dbeaf5"/>
<text x="319.85" y="1394.6274473067915" font-size="22" fill="#111" text-anchor="middle" font-weight="bold" stroke="#111" stroke-width="0.6" textLength="42" lengthAdjust="spacingAndGlyphs">702</text>
<rect x="286.85" y="1166.4037236533957" width="66" height="35" fill="#b0b2ef"/>
<text x="322.85" y="1191.9037236533957" font-size="22" fill="#111" text-anchor="middle" font-weight="bold" stroke="#111" stroke-width="0.6" textLength="42" lengthAdjust="spacingAndGlyphs">655</text>
<rect x="286.85" y="1021.1955737704918" width="66" height="35" fill="#f7cbb2"/>
<text x="322.85" y="1046.6955737704918" font-size="22" fill="#111" text-anchor="middle" font-weight="bold" stroke="#111" stroke-width="0.6" textLength="42" lengthAdjust="spacingAndGlyphs">317</text>
<rect x="286.85" y="931.8596955503514" width="66" height="35" fill="#fdf2d2"/>
<text x="322.85" y="957.3596955503514" font-size="22" fill="#111" text-anchor="middle" font-weight="bold" stroke="#111" stroke-width="0.6" textLength="42" lengthAdjust="spacingAndGlyphs">281</text>
<rect x="289.35" y="862.9903981264638" width="61" height="35" fill="#e0efdc"/>
<text x="319.85" y="888.4903981264638" font-size="22" fill="#111" text-anchor="middle" font-weight="bold" stroke="#111" stroke-width="0.6" textLength="42" lengthAdjust="spacingAndGlyphs">180</text>
<text x="319.85" y="1528.4" font-size="22" fill="#111" text-anchor="middle" font-weight="bold" stroke="#111" stroke-width="0.6" textLength="55.4" lengthAdjust="spacingAndGlyphs">2026</text>
<rect x="512.3" y="1278.0" width="192.5" height="213.5" fill="#4bb2e6"/>
<rect x="512.3" y="1078.4" width="192.5" height="199.6" fill="#4b50d1"/>
<rect x="512.3" y="948.8" width="192.5" height="129.6" fill="#f07b70"/>
<rect x="512.3" y="890.9" width="192.5" height="57.9" fill="#f2b600"/>
<rect x="512.3" y="853.4" width="192.5" height="37.5" fill="#2eb5a8"/>
<rect x="567.05" y="1367.2432809050774" width="83" height="35" fill="#dbeaf5"/>
<text x="608.55" y="1392.7432809050774" font-size="22" fill="#111" text-anchor="middle" font-weight="bold" stroke="#111" stroke-width="0.6" textLength="64" lengthAdjust="spacingAndGlyphs">1,213</text>
<rect x="564.55" y="1160.6826710816777" width="88" height="35" fill="#b0b2ef"/>
<text x="611.55" y="1186.1826710816777" font-size="22" fill="#111" text-anchor="middle" font-weight="bold" stroke="#111" stroke-width="0.6" textLength="64" lengthAdjust="spacingAndGlyphs">1,134</text>
<rect x="575.55" y="996.1030629139073" width="66" height="35" fill="#f7cbb2"/>
<text x="611.55" y="1021.6030629139073" font-size="22" fill="#111" text-anchor="middle" font-weight="bold" stroke="#111" stroke-width="0.6" textLength="42" lengthAdjust="spacingAndGlyphs">736</text>
<rect x="575.55" y="902.3718956953643" width="66" height="35" fill="#fdf2d2"/>
<text x="611.55" y="927.8718956953643" font-size="22" fill="#111" text-anchor="middle" font-weight="bold" stroke="#111" stroke-width="0.6" textLength="42" lengthAdjust="spacingAndGlyphs">329</text>
<rect x="578.05" y="854.6702124724062" width="61" height="35" fill="#e0efdc"/>
<text x="608.55" y="880.1702124724062" font-size="22" fill="#111" text-anchor="middle" font-weight="bold" stroke="#111" stroke-width="0.6" textLength="42" lengthAdjust="spacingAndGlyphs">213</text>
<text x="608.55" y="1528.4" font-size="22" fill="#111" text-anchor="middle" font-weight="bold" stroke="#111" stroke-width="0.6" textLength="55.4" lengthAdjust="spacingAndGlyphs">2027</text>
<rect x="801.0" y="1298.6" width="192.5" height="192.9" fill="#4bb2e6"/>
<rect x="801.0" y="1117.8" width="192.5" height="180.7" fill="#4b50d1"/>
<rect x="801.0" y="985.3" width="192.5" height="132.5" fill="#f07b70"/>
<rect x="801.0" y="905.6" width="192.5" height="79.7" fill="#f2b600"/>
<rect x="801.0" y="853.5" width="192.5" height="52.1" fill="#2eb5a8"/>
<rect x="855.75" y="1377.5271470636349" width="83" height="35" fill="#dbeaf5"/>
<text x="897.25" y="1403.0271470636349" font-size="22" fill="#111" text-anchor="middle" font-weight="bold" stroke="#111" stroke-width="0.6" textLength="64" lengthAdjust="spacingAndGlyphs">1,849</text>
<rect x="853.25" y="1190.6859970554556" width="88" height="35" fill="#b0b2ef"/>
<text x="900.25" y="1216.1859970554556" font-size="22" fill="#111" text-anchor="middle" font-weight="bold" stroke="#111" stroke-width="0.6" textLength="64" lengthAdjust="spacingAndGlyphs">1,732</text>
<rect x="853.25" y="1034.054572223131" width="88" height="35" fill="#f7cbb2"/>
<text x="900.25" y="1059.554572223131" font-size="22" fill="#111" text-anchor="middle" font-weight="bold" stroke="#111" stroke-width="0.6" textLength="64" lengthAdjust="spacingAndGlyphs">1,270</text>
<rect x="864.25" y="927.9292164240144" width="66" height="35" fill="#fdf2d2"/>
<text x="900.25" y="953.4292164240144" font-size="22" fill="#111" text-anchor="middle" font-weight="bold" stroke="#111" stroke-width="0.6" textLength="42" lengthAdjust="spacingAndGlyphs">764</text>
<rect x="866.75" y="862.0313185015541" width="61" height="35" fill="#e0efdc"/>
<text x="897.25" y="887.5313185015541" font-size="22" fill="#111" text-anchor="middle" font-weight="bold" stroke="#111" stroke-width="0.6" textLength="42" lengthAdjust="spacingAndGlyphs">499</text>
<text x="897.25" y="1528.4" font-size="22" fill="#111" text-anchor="middle" font-weight="bold" stroke="#111" stroke-width="0.6" textLength="55.4" lengthAdjust="spacingAndGlyphs">2028</text>
<rect x="1089.7" y="1300.6" width="192.5" height="190.9" fill="#4bb2e6"/>
<rect x="1089.7" y="1121.6" width="192.5" height="179.1" fill="#4b50d1"/>
<rect x="1089.7" y="980.8" width="192.5" height="140.7" fill="#f07b70"/>
<rect x="1089.7" y="916.9" width="192.5" height="63.9" fill="#f2b600"/>
<rect x="1089.7" y="853.7" width="192.5" height="63.2" fill="#2eb5a8"/>
<rect x="1144.4499999999998" y="1378.5695781071836" width="83" height="35" fill="#dbeaf5"/>
<text x="1185.9499999999998" y="1404.0695781071836" font-size="22" fill="#111" text-anchor="middle" font-weight="bold" stroke="#111" stroke-width="0.6" textLength="64" lengthAdjust="spacingAndGlyphs">2,624</text>
<rect x="1141.9499999999998" y="1193.6003990877994" width="88" height="35" fill="#b0b2ef"/>
<text x="1188.9499999999998" y="1219.1003990877994" font-size="22" fill="#111" text-anchor="middle" font-weight="bold" stroke="#111" stroke-width="0.6" textLength="64" lengthAdjust="spacingAndGlyphs">2,462</text>
<rect x="1141.9499999999998" y="1033.6889794754848" width="88" height="35" fill="#f7cbb2"/>
<text x="1188.9499999999998" y="1059.1889794754848" font-size="22" fill="#111" text-anchor="middle" font-weight="bold" stroke="#111" stroke-width="0.6" textLength="64" lengthAdjust="spacingAndGlyphs">1,935</text>
<rect x="1152.9499999999998" y="931.3485803876853" width="66" height="35" fill="#fdf2d2"/>
<text x="1188.9499999999998" y="956.8485803876853" font-size="22" fill="#111" text-anchor="middle" font-weight="bold" stroke="#111" stroke-width="0.6" textLength="42" lengthAdjust="spacingAndGlyphs">879</text>
<rect x="1155.4499999999998" y="867.7767901938427" width="61" height="35" fill="#e0efdc"/>
<text x="1185.9499999999998" y="893.2767901938427" font-size="22" fill="#111" text-anchor="middle" font-weight="bold" stroke="#111" stroke-width="0.6" textLength="42" lengthAdjust="spacingAndGlyphs">869</text>
<text x="1185.9499999999998" y="1528.4" font-size="22" fill="#111" text-anchor="middle" font-weight="bold" stroke="#111" stroke-width="0.6" textLength="55.4" lengthAdjust="spacingAndGlyphs">2029</text>
<rect x="1378.4" y="1309.8" width="192.5" height="181.7" fill="#4bb2e6"/>
<rect x="1378.4" y="1139.1" width="192.5" height="170.7" fill="#4b50d1"/>
<rect x="1378.4" y="998.8" width="192.5" height="140.3" fill="#f07b70"/>
<rect x="1378.4" y="921.8" width="192.5" height="77.0" fill="#f2b600"/>
<rect x="1378.4" y="853.5" width="192.5" height="68.3" fill="#2eb5a8"/>
<rect x="1433.1499999999999" y="1383.1633669710077" width="83" height="35" fill="#dbeaf5"/>
<text x="1474.6499999999999" y="1408.6633669710077" font-size="22" fill="#111" text-anchor="middle" font-weight="bold" stroke="#111" stroke-width="0.6" textLength="64" lengthAdjust="spacingAndGlyphs">3,556</text>
<rect x="1430.6499999999999" y="1206.9566474451385" width="88" height="35" fill="#b0b2ef"/>
<text x="1477.6499999999999" y="1232.4566474451385" font-size="22" fill="#111" text-anchor="middle" font-weight="bold" stroke="#111" stroke-width="0.6" textLength="64" lengthAdjust="spacingAndGlyphs">3,342</text>
<rect x="1430.6499999999999" y="1051.4410619894281" width="88" height="35" fill="#f7cbb2"/>
<text x="1477.6499999999999" y="1076.9410619894281" font-size="22" fill="#111" text-anchor="middle" font-weight="bold" stroke="#111" stroke-width="0.6" textLength="64" lengthAdjust="spacingAndGlyphs">2,746</text>
<rect x="1430.6499999999999" y="942.7998358161141" width="88" height="35" fill="#fdf2d2"/>
<text x="1477.6499999999999" y="968.2998358161141" font-size="22" fill="#111" text-anchor="middle" font-weight="bold" stroke="#111" stroke-width="0.6" textLength="64" lengthAdjust="spacingAndGlyphs">1,507</text>
<rect x="1433.1499999999999" y="870.1765096908538" width="83" height="35" fill="#e0efdc"/>
<text x="1474.6499999999999" y="895.6765096908538" font-size="22" fill="#111" text-anchor="middle" font-weight="bold" stroke="#111" stroke-width="0.6" textLength="64" lengthAdjust="spacingAndGlyphs">1,336</text>
<text x="1474.6499999999999" y="1528.4" font-size="22" fill="#111" text-anchor="middle" font-weight="bold" stroke="#111" stroke-width="0.6" textLength="55.4" lengthAdjust="spacingAndGlyphs">2030</text>
<text x="153" y="862.0" font-size="22" fill="#111" text-anchor="end" font-weight="bold" stroke="#111" stroke-width="0.6" textLength="67.3" lengthAdjust="spacingAndGlyphs">100%</text>
<text x="153" y="925.79" font-size="22" fill="#111" text-anchor="end" font-weight="bold" stroke="#111" stroke-width="0.6" textLength="53.4" lengthAdjust="spacingAndGlyphs">90%</text>
<text x="153" y="989.58" font-size="22" fill="#111" text-anchor="end" font-weight="bold" stroke="#111" stroke-width="0.6" textLength="53.4" lengthAdjust="spacingAndGlyphs">80%</text>
<text x="153" y="1053.3700000000001" font-size="22" fill="#111" text-anchor="end" font-weight="bold" stroke="#111" stroke-width="0.6" textLength="53.4" lengthAdjust="spacingAndGlyphs">70%</text>
<text x="153" y="1117.16" font-size="22" fill="#111" text-anchor="end" font-weight="bold" stroke="#111" stroke-width="0.6" textLength="53.4" lengthAdjust="spacingAndGlyphs">60%</text>
<text x="153" y="1180.95" font-size="22" fill="#111" text-anchor="end" font-weight="bold" stroke="#111" stroke-width="0.6" textLength="53.4" lengthAdjust="spacingAndGlyphs">50%</text>
<text x="153" y="1244.74" font-size="22" fill="#111" text-anchor="end" font-weight="bold" stroke="#111" stroke-width="0.6" textLength="53.4" lengthAdjust="spacingAndGlyphs">40%</text>
<text x="153" y="1308.5300000000002" font-size="22" fill="#111" text-anchor="end" font-weight="bold" stroke="#111" stroke-width="0.6" textLength="53.4" lengthAdjust="spacingAndGlyphs">30%</text>
<text x="153" y="1372.3200000000002" font-size="22" fill="#111" text-anchor="end" font-weight="bold" stroke="#111" stroke-width="0.6" textLength="53.4" lengthAdjust="spacingAndGlyphs">20%</text>
<text x="153" y="1436.1100000000001" font-size="22" fill="#111" text-anchor="end" font-weight="bold" stroke="#111" stroke-width="0.6" textLength="53.4" lengthAdjust="spacingAndGlyphs">10%</text>
<text x="153" y="1499.9" font-size="22" fill="#111" text-anchor="end" font-weight="bold" stroke="#111" stroke-width="0.6" textLength="39.6" lengthAdjust="spacingAndGlyphs">0%</text>
<line x1="1645" y1="904.0" x2="1699" y2="904.0" stroke="#4bb2e6" stroke-width="4" stroke-linecap="round"/>
<circle cx="1671" cy="904.0" r="5" fill="#4bb2e6"/>
<text x="1705" y="911.5" font-size="22" fill="#111" font-weight="bold" stroke="#111" stroke-width="0.6" textLength="93.5" lengthAdjust="spacingAndGlyphs">Prenatal</text>
<line x1="1645" y1="1036.2" x2="1699" y2="1036.2" stroke="#4b50d1" stroke-width="4" stroke-linecap="round"/>
<rect x="1665" y="1030.2" width="12" height="12" fill="#4b50d1"/>
<text x="1705" y="1043.7" font-size="22" fill="#111" font-weight="bold" stroke="#111" stroke-width="0.6" textLength="173" lengthAdjust="spacingAndGlyphs">Pre-Conception</text>
<line x1="1645" y1="1168.4" x2="1699" y2="1168.4" stroke="#f07b70" stroke-width="4" stroke-linecap="round"/>
<path d="M1671 1162.4 L1677 1173.4 L1665 1173.4 Z" fill="#f07b70"/>
<text x="1705" y="1175.9" font-size="22" fill="#111" font-weight="bold" stroke="#111" stroke-width="0.6" textLength="203" lengthAdjust="spacingAndGlyphs">Hereditary Cancer</text>
<line x1="1645" y1="1300.6" x2="1699" y2="1300.6" stroke="#f2b600" stroke-width="4" stroke-linecap="round"/>
<path d="M1666 1295.6 L1676 1305.6 M1676 1295.6 L1666 1305.6" stroke="#f8d870" stroke-width="1.5"/>
<text x="1705" y="1308.1" font-size="22" fill="#111" font-weight="bold" stroke="#111" stroke-width="0.6" textLength="191" lengthAdjust="spacingAndGlyphs">Pediatric Genetic</text>
<line x1="1645" y1="1432.8" x2="1699" y2="1432.8" stroke="#2eb5a8" stroke-width="4" stroke-linecap="round"/>
<rect x="1665" y="1426.8" width="12" height="12" fill="#5cb85c"/>
<text x="1705" y="1440.3" font-size="22" fill="#111" font-weight="bold" stroke="#111" stroke-width="0.6" textLength="167" lengthAdjust="spacingAndGlyphs">Other Revenue</text>
<line x1="2052.3" y1="1489.5" x2="2822.4" y2="1489.5" stroke="#7ab3cf" stroke-width="1.3"/>
<line x1="2052.3" y1="1409.5" x2="2822.4" y2="1409.5" stroke="#7ab3cf" stroke-width="1.3"/>
<line x1="2052.3" y1="1330.5" x2="2822.4" y2="1330.5" stroke="#7ab3cf" stroke-width="1.3"/>
<line x1="2052.3" y1="1250.5" x2="2822.4" y2="1250.5" stroke="#7ab3cf" stroke-width="1.3"/>
<line x1="2052.3" y1="1171.5" x2="2822.4" y2="1171.5" stroke="#7ab3cf" stroke-width="1.3"/>
<line x1="2052.3" y1="1091.5" x2="2822.4" y2="1091.5" stroke="#7ab3cf" stroke-width="1.3"/>
<line x1="2052.3" y1="1012.5" x2="2822.4" y2="1012.5" stroke="#7ab3cf" stroke-width="1.3"/>
<line x1="2052.3" y1="933.5" x2="2822.4" y2="933.5" stroke="#7ab3cf" stroke-width="1.3"/>
<line x1="2052.3" y1="853.5" x2="2822.4" y2="853.5" stroke="#7ab3cf" stroke-width="1.3"/>
<text x="2023.6" y="1497.0" font-size="22" fill="#111" text-anchor="end" font-weight="bold" stroke="#111" stroke-width="0.6" textLength="7.6" lengthAdjust="spacingAndGlyphs">-</text>
<text x="2023.6" y="1417.5625" font-size="22" fill="#111" text-anchor="end" font-weight="bold" stroke="#111" stroke-width="0.6" textLength="42" lengthAdjust="spacingAndGlyphs">500</text>
<text x="2023.6" y="1338.125" font-size="22" fill="#111" text-anchor="end" font-weight="bold" stroke="#111" stroke-width="0.6" textLength="62.8" lengthAdjust="spacingAndGlyphs">1,000</text>
<text x="2023.6" y="1258.6875" font-size="22" fill="#111" text-anchor="end" font-weight="bold" stroke="#111" stroke-width="0.6" textLength="62.8" lengthAdjust="spacingAndGlyphs">1,500</text>
<text x="2023.6" y="1179.25" font-size="22" fill="#111" text-anchor="end" font-weight="bold" stroke="#111" stroke-width="0.6" textLength="62.8" lengthAdjust="spacingAndGlyphs">2,000</text>
<text x="2023.6" y="1099.8125" font-size="22" fill="#111" text-anchor="end" font-weight="bold" stroke="#111" stroke-width="0.6" textLength="62.8" lengthAdjust="spacingAndGlyphs">2,500</text>
<text x="2023.6" y="1020.375" font-size="22" fill="#111" text-anchor="end" font-weight="bold" stroke="#111" stroke-width="0.6" textLength="62.8" lengthAdjust="spacingAndGlyphs">3,000</text>
<text x="2023.6" y="940.9375" font-size="22" fill="#111" text-anchor="end" font-weight="bold" stroke="#111" stroke-width="0.6" textLength="62.8" lengthAdjust="spacingAndGlyphs">3,500</text>
<text x="2023.6" y="861.5" font-size="22" fill="#111" text-anchor="end" font-weight="bold" stroke="#111" stroke-width="0.6" textLength="62.8" lengthAdjust="spacingAndGlyphs">4,000</text>
<text x="2129.3100000000004" y="1525.7" font-size="22" fill="#111" text-anchor="middle" font-weight="bold" stroke="#111" stroke-width="0.6" textLength="54.4" lengthAdjust="spacingAndGlyphs">2026</text>
<text x="2283.33" y="1525.7" font-size="22" fill="#111" text-anchor="middle" font-weight="bold" stroke="#111" stroke-width="0.6" textLength="54.4" lengthAdjust="spacingAndGlyphs">2027</text>
<text x="2437.3500000000004" y="1525.7" font-size="22" fill="#111" text-anchor="middle" font-weight="bold" stroke="#111" stroke-width="0.6" textLength="54.4" lengthAdjust="spacingAndGlyphs">2028</text>
<text x="2591.37" y="1525.7" font-size="22" fill="#111" text-anchor="middle" font-weight="bold" stroke="#111" stroke-width="0.6" textLength="54.4" lengthAdjust="spacingAndGlyphs">2029</text>
<text x="2745.3900000000003" y="1525.7" font-size="22" fill="#111" text-anchor="middle" font-weight="bold" stroke="#111" stroke-width="0.6" textLength="54.4" lengthAdjust="spacingAndGlyphs">2030</text>
<path d="M2129.3 1377.1 L2283.3 1295.9 L2437.4 1194.8 L2591.4 1071.7 L2745.4 923.6" fill="none" stroke="#4bb2e6" stroke-width="3.6" stroke-linejoin="round"/>
<circle cx="2129.3" cy="1377.1" r="7" fill="#4bb2e6"/>
<circle cx="2283.3" cy="1295.9" r="7" fill="#4bb2e6"/>
<circle cx="2437.4" cy="1194.8" r="7" fill="#4bb2e6"/>
<circle cx="2591.4" cy="1071.7" r="7" fill="#4bb2e6"/>
<circle cx="2745.4" cy="923.6" r="7" fill="#4bb2e6"/>
<path d="M2129.3 1384.5 L2283.3 1308.4 L2437.4 1213.4 L2591.4 1097.4 L2745.4 957.6" fill="none" stroke="#4b50d1" stroke-width="3.6" stroke-linejoin="round"/>
<rect x="2120.9" y="1376.1" width="16.8" height="16.8" fill="#4b50d1"/>
<rect x="2274.9" y="1300.0" width="16.8" height="16.8" fill="#4b50d1"/>
<rect x="2429.0" y="1205.0" width="16.8" height="16.8" fill="#4b50d1"/>
<rect x="2583.0" y="1089.0" width="16.8" height="16.8" fill="#4b50d1"/>
<rect x="2737.0" y="949.2" width="16.8" height="16.8" fill="#4b50d1"/>
<path d="M2129.3 1438.2 L2283.3 1371.7 L2437.4 1286.8 L2591.4 1181.2 L2745.4 1052.3" fill="none" stroke="#f07b70" stroke-width="3.6" stroke-linejoin="round"/>
<path d="M2129.3 1429.2 L2137.8 1444.2 L2120.8 1444.2 Z" fill="#f07b70"/>
<path d="M2283.3 1362.7 L2291.8 1377.7 L2274.8 1377.7 Z" fill="#f07b70"/>
<path d="M2437.4 1277.8 L2445.9 1292.8 L2428.9 1292.8 Z" fill="#f07b70"/>
<path d="M2591.4 1172.2 L2599.9 1187.2 L2582.9 1187.2 Z" fill="#f07b70"/>
<path d="M2745.4 1043.3 L2753.9 1058.3 L2736.9 1058.3 Z" fill="#f07b70"/>
<path d="M2129.3 1444.0 L2283.3 1436.3 L2437.4 1367.2 L2591.4 1348.9 L2745.4 1249.2" fill="none" stroke="#f2b600" stroke-width="3.6" stroke-linejoin="round"/>
<rect x="2120.9" y="1435.6" width="16.8" height="16.8" fill="#f2b600"/>
<rect x="2274.9" y="1427.9" width="16.8" height="16.8" fill="#f2b600"/>
<rect x="2429.0" y="1358.8" width="16.8" height="16.8" fill="#f2b600"/>
<rect x="2583.0" y="1340.5" width="16.8" height="16.8" fill="#f2b600"/>
<rect x="2737.0" y="1240.8" width="16.8" height="16.8" fill="#f2b600"/>
<path d="M2129.3 1460.0 L2283.3 1454.8 L2437.4 1409.3 L2591.4 1350.5 L2745.4 1276.3" fill="none" stroke="#2eb5a8" stroke-width="3.6" stroke-linejoin="round"/>
<rect x="2120.9" y="1451.6" width="16.8" height="16.8" fill="#2eb5a8"/>
<rect x="2274.9" y="1446.4" width="16.8" height="16.8" fill="#2eb5a8"/>
<rect x="2429.0" y="1400.9" width="16.8" height="16.8" fill="#2eb5a8"/>
<rect x="2583.0" y="1342.1" width="16.8" height="16.8" fill="#2eb5a8"/>
<rect x="2737.0" y="1267.9" width="16.8" height="16.8" fill="#2eb5a8"/>
<rect x="82" y="1536.6" width="2741.5" height="42.1" fill="#4b50d1"/>
<line x1="1824" y1="1536.6" x2="1824" y2="1578.7" stroke="#9ea0ea" stroke-width="1.2"/>
<text x="953" y="1570.5" font-size="35" fill="#fff" text-anchor="middle" font-weight="bold" stroke="#fff" stroke-width="0.6" textLength="520.5" lengthAdjust="spacingAndGlyphs">Revenue Depth ($'000) - 2026</text>
<text x="2323.8" y="1570.5" font-size="35" fill="#fff" text-anchor="middle" font-weight="bold" stroke="#fff" stroke-width="0.6" textLength="570.3" lengthAdjust="spacingAndGlyphs">Monthly Run-Rate ($'000) - 2026</text>
<rect x="2520.5" y="1579.2" width="303" height="28.5" fill="#fff36b" stroke="#d0d0d0" stroke-width="1.2"/>
<text x="2672" y="1601.6" font-size="22" fill="#111" text-anchor="middle" font-weight="bold" stroke="#111" stroke-width="0.6" textLength="54.6" lengthAdjust="spacingAndGlyphs">2026</text>
<line x1="81" y1="1620.5" x2="1563.3" y2="1620.5" stroke="#6aa8d8" stroke-width="1.3"/>
<text x="252" y="1684.5" font-size="26" fill="#111" font-weight="bold" stroke="#111" stroke-width="0.6" textLength="61" lengthAdjust="spacingAndGlyphs">702.0</text>
<rect x="1618" y="1661" width="12.7" height="12.7" fill="#4bb2e6"/>
<text x="1637" y="1675.6" font-size="26" fill="#111" font-weight="bold" stroke="#111" stroke-width="0.6" textLength="92" lengthAdjust="spacingAndGlyphs">Prenatal</text>
<rect x="2860" y="278" width="30" height="1392.4" fill="#141414"/>
<path d="M2869.5 295.5 L2876.5 286 L2883.5 295.5 Z" fill="#9a9a9a" stroke="#9a9a9a" stroke-width="1.5" stroke-linejoin="round"/>
<rect x="2870" y="304" width="12" height="562" fill="#9a9a9a" rx="6"/>
<path d="M2869.5 1654 L2876.5 1663.5 L2883.5 1654 Z" fill="#9a9a9a" stroke="#9a9a9a" stroke-width="1.5" stroke-linejoin="round"/>
<rect x="11" y="1670" width="2879" height="48.5" fill="#0a0a0a"/>
<path d="M2876 1670 L2890 1670 L2890 1684 Q2890 1670 2876 1670Z" fill="#141414"/>
<path d="M54.0 1685.5 L47.0 1692.5 L54.0 1699.5" fill="none" stroke="#d0d0d0" stroke-width="1.5"/>
<path d="M95.5 1685.5 L102.5 1692.5 L95.5 1699.5" fill="none" stroke="#d0d0d0" stroke-width="1.5"/>
<circle cx="140.5" cy="1692.5" r="2.3" fill="#d0d0d0"/>
<circle cx="146.5" cy="1692.5" r="2.3" fill="#d0d0d0"/>
<circle cx="152.5" cy="1692.5" r="2.3" fill="#d0d0d0"/>
<rect x="177" y="1676" width="88.8" height="36" fill="#fde96b" rx="6"/>
<text x="221.4" y="1703.7" font-size="23" fill="#1a1a1a" text-anchor="middle" textLength="60.9" lengthAdjust="spacingAndGlyphs">Payroll</text>
<rect x="279.2" y="1676" width="86.5" height="36" fill="#fde96b" rx="6"/>
<text x="322.45" y="1703.7" font-size="23" fill="#1a1a1a" text-anchor="middle" textLength="61" lengthAdjust="spacingAndGlyphs">CAPEX</text>
<rect x="379" y="1676" width="113" height="36" fill="#fde96b" rx="6"/>
<text x="435.5" y="1703.7" font-size="23" fill="#1a1a1a" text-anchor="middle" textLength="85.7" lengthAdjust="spacingAndGlyphs">CapTable</text>
<rect x="505.3" y="1676" width="89.3" height="36" fill="#fde96b" rx="6"/>
<text x="549.95" y="1703.7" font-size="23" fill="#1a1a1a" text-anchor="middle" textLength="63.6" lengthAdjust="spacingAndGlyphs">Capital</text>
<rect x="608" y="1676" width="41.8" height="36" fill="#4cb3e7" rx="6"/>
<text x="628.9" y="1703.7" font-size="23" fill="#1a1a1a" text-anchor="middle" textLength="15" lengthAdjust="spacingAndGlyphs">IS</text>
<rect x="663" y="1676" width="47.6" height="36" fill="#4cb3e7" rx="6"/>
<text x="686.8" y="1703.7" font-size="23" fill="#1a1a1a" text-anchor="middle" textLength="22.5" lengthAdjust="spacingAndGlyphs">CF</text>
<rect x="724.4" y="1676" width="47.1" height="36" fill="#4cb3e7" rx="6"/>
<text x="747.95" y="1703.7" font-size="23" fill="#1a1a1a" text-anchor="middle" textLength="21.6" lengthAdjust="spacingAndGlyphs">BS</text>
<rect x="785.3" y="1676" width="114.5" height="36" fill="#4cb3e7" rx="6"/>
<text x="842.55" y="1703.7" font-size="23" fill="#1a1a1a" text-anchor="middle" textLength="87.2" lengthAdjust="spacingAndGlyphs">Scenarios</text>
<rect x="913" y="1676" width="114.4" height="36" fill="#4cb3e7" rx="6"/>
<text x="970.2" y="1703.7" font-size="23" fill="#1a1a1a" text-anchor="middle" textLength="86.8" lengthAdjust="spacingAndGlyphs">Valuation</text>
<rect x="1040.8" y="1676" width="113.7" height="36" fill="#4cb3e7" rx="6"/>
<text x="1097.65" y="1703.7" font-size="23" fill="#1a1a1a" text-anchor="middle" textLength="86.9" lengthAdjust="spacingAndGlyphs">Summary</text>
<rect x="1168.3" y="1676" width="47.0" height="36" fill="#4cb3e7" rx="6"/>
<text x="1191.8" y="1703.7" font-size="23" fill="#1a1a1a" text-anchor="middle" textLength="21" lengthAdjust="spacingAndGlyphs">BE</text>
<rect x="1229" y="1676" width="71.6" height="36" fill="#4cb3e7" rx="6"/>
<text x="1264.8" y="1703.7" font-size="23" fill="#1a1a1a" text-anchor="middle" textLength="45.4" lengthAdjust="spacingAndGlyphs">ROIC</text>
<rect x="1314" y="1676" width="84.4" height="36" fill="#4cb3e7" rx="6"/>
<text x="1356.2" y="1703.7" font-size="23" fill="#1a1a1a" text-anchor="middle" textLength="58.4" lengthAdjust="spacingAndGlyphs">Charts</text>
<rect x="1412" y="1676" width="63.5" height="36" fill="#4cb3e7" rx="6"/>
<text x="1443.75" y="1703.7" font-size="23" fill="#1a1a1a" text-anchor="middle" textLength="36.5" lengthAdjust="spacingAndGlyphs">KPIs</text>
<rect x="1489" y="1676" width="168.3" height="36" fill="#4cb3e7" rx="6"/>
<text x="1573.15" y="1703.7" font-size="23" fill="#1a1a1a" text-anchor="middle" textLength="142.8" lengthAdjust="spacingAndGlyphs">Sources &amp; Uses</text>
<rect x="1671" y="1676" width="82.5" height="36" fill="#4cb3e7" rx="6"/>
<text x="1712.25" y="1703.7" font-size="23" fill="#1a1a1a" text-anchor="middle" textLength="55.5" lengthAdjust="spacingAndGlyphs">Ratios</text>
<rect x="1767" y="1676" width="95.3" height="36" fill="#4cb3e7" rx="6"/>
<text x="1814.65" y="1703.7" font-size="23" fill="#1a1a1a" text-anchor="middle" textLength="69" lengthAdjust="spacingAndGlyphs">DuPont</text>
<line x1="272" y1="1681" x2="272" y2="1707" stroke="#4a4a4a" stroke-width="1.3"/>
<line x1="372" y1="1681" x2="372" y2="1707" stroke="#4a4a4a" stroke-width="1.3"/>
<line x1="498.4" y1="1681" x2="498.4" y2="1707" stroke="#4a4a4a" stroke-width="1.3"/>
<line x1="601" y1="1681" x2="601" y2="1707" stroke="#4a4a4a" stroke-width="1.3"/>
<line x1="656" y1="1681" x2="656" y2="1707" stroke="#4a4a4a" stroke-width="1.3"/>
<line x1="717.5" y1="1681" x2="717.5" y2="1707" stroke="#4a4a4a" stroke-width="1.3"/>
<line x1="778.4" y1="1681" x2="778.4" y2="1707" stroke="#4a4a4a" stroke-width="1.3"/>
<line x1="906" y1="1681" x2="906" y2="1707" stroke="#4a4a4a" stroke-width="1.3"/>
<line x1="1034" y1="1681" x2="1034" y2="1707" stroke="#4a4a4a" stroke-width="1.3"/>
<line x1="1161" y1="1681" x2="1161" y2="1707" stroke="#4a4a4a" stroke-width="1.3"/>
<line x1="1222" y1="1681" x2="1222" y2="1707" stroke="#4a4a4a" stroke-width="1.3"/>
<line x1="1307" y1="1681" x2="1307" y2="1707" stroke="#4a4a4a" stroke-width="1.3"/>
<line x1="1405" y1="1681" x2="1405" y2="1707" stroke="#4a4a4a" stroke-width="1.3"/>
<line x1="1482" y1="1681" x2="1482" y2="1707" stroke="#4a4a4a" stroke-width="1.3"/>
<line x1="1664" y1="1681" x2="1664" y2="1707" stroke="#4a4a4a" stroke-width="1.3"/>
<line x1="1760" y1="1681" x2="1760" y2="1707" stroke="#4a4a4a" stroke-width="1.3"/>
<line x1="2033.5" y1="1681" x2="2033.5" y2="1707" stroke="#4a4a4a" stroke-width="1.3"/>
<defs><linearGradient id="atab" x1="0" y1="0" x2="0" y2="1"><stop offset="0" stop-color="#ffffff"/><stop offset="1" stop-color="#ddeefa"/></linearGradient></defs>
<path d="M1869 1669 L1869 1670.4 Q1875.6 1670.4 1875.6 1677 L1875.6 1705 Q1875.6 1712 1882.6 1712 L2020 1712 Q2027 1712 2027 1705 L2027 1677 Q2027 1670.4 2033.6 1670.4 L2033.6 1669 Z" fill="url(#atab)"/>
<text x="1951.4" y="1698.5" font-size="22" fill="#1a1a1a" text-anchor="middle" textLength="126" lengthAdjust="spacingAndGlyphs">Top_Revenue</text>
<rect x="1888.4" y="1706" width="126" height="2.6" fill="#1e7e3e"/>
<clipPath id="tclip"><rect x="2040" y="1670" width="32" height="50"/></clipPath>
<g clip-path="url(#tclip)">
<rect x="2040" y="1676" width="60" height="36" fill="#4cb3e7" rx="6"/>
<text x="2054" y="1703.5" font-size="22" fill="#1a1a1a">To</text>
</g>
<circle cx="2089" cy="1692.5" r="2.3" fill="#d0d0d0"/>
<circle cx="2095" cy="1692.5" r="2.3" fill="#d0d0d0"/>
<circle cx="2101" cy="1692.5" r="2.3" fill="#d0d0d0"/>
<line x1="2133" y1="1692.5" x2="2151" y2="1692.5" stroke="#d8d8d8" stroke-width="1.6"/>
<line x1="2142" y1="1683.5" x2="2142" y2="1701.5" stroke="#d8d8d8" stroke-width="1.6"/>
<circle cx="2191.5" cy="1686" r="1.8" fill="#d0d0d0"/>
<circle cx="2191.5" cy="1692.5" r="1.8" fill="#d0d0d0"/>
<circle cx="2191.5" cy="1699" r="1.8" fill="#d0d0d0"/>
<rect x="2216" y="1680" width="645" height="26" fill="#141414" rx="13"/>
<path d="M2234 1686 L2226 1693 L2234 1700 Z" fill="#9a9a9a"/>
<rect x="2242" y="1687" width="512" height="12" fill="#9a9a9a" rx="6"/>
<path d="M2843 1686 L2851 1693 L2843 1700 Z" fill="#9a9a9a"/>
<rect x="11" y="1718.5" width="2879" height="32.3" fill="#141414"/>
<line x1="11" y1="1718.5" x2="2890" y2="1718.5" stroke="#2e2e2e" stroke-width="1"/>
<text x="27.5" y="1741" font-size="16" fill="#f0f0f0" textLength="42.5" lengthAdjust="spacingAndGlyphs">Ready</text>
<path d="M100 1728 L120 1728 L120 1746 L100 1746 Z M100 1732 L120 1732" fill="none" stroke="#eee" stroke-width="1.4"/>
<circle cx="114" cy="1740" r="5" fill="#141414" stroke="#eee" stroke-width="1.6"/><circle cx="114" cy="1740" r="2" fill="#eee"/>
<path d="M148 1731 Q156 1734 164 1731 M156 1733 L156 1739 L151 1746 M156 1739 L160 1743 M159 1739 L166 1746 M166 1739 L159 1746" fill="none" stroke="#eee" stroke-width="1.4"/><circle cx="156" cy="1728" r="2" fill="none" stroke="#eee" stroke-width="1.3"/>
<text x="173.3" y="1741" font-size="16" fill="#f0f0f0" font-weight="bold" textLength="187" lengthAdjust="spacingAndGlyphs">Accessibility: Investigate</text>
<rect x="2445.6" y="1719" width="59" height="31.8" fill="#262626"/>
<rect x="2466" y="1726" width="18" height="17" fill="none" stroke="#eee" stroke-width="1.4"/><path d="M2472 1726 L2472 1743 M2478 1726 L2478 1743 M2466 1732 L2484 1732 M2466 1737.5 L2484 1737.5" stroke="#eee" stroke-width="1.2"/>
<rect x="2526" y="1726" width="19" height="17" fill="none" stroke="#eee" stroke-width="1.4"/><rect x="2530" y="1729.5" width="11" height="10" fill="none" stroke="#eee" stroke-width="1.2"/><path d="M2532 1733 L2539 1733 M2532 1736 L2539 1736" stroke="#eee" stroke-width="1"/>
<rect x="2585" y="1726" width="19" height="17" fill="none" stroke="#eee" stroke-width="1.4"/><path d="M2591 1726 L2591 1735 L2598 1735 L2598 1726" fill="none" stroke="#eee" stroke-width="1.4"/>
<line x1="2632" y1="1735.5" x2="2644" y2="1735.5" stroke="#ddd" stroke-width="1.4"/>
<line x1="2653" y1="1735.5" x2="2801" y2="1735.5" stroke="#bdbdbd" stroke-width="2"/>
<line x1="2727" y1="1731" x2="2727" y2="1740" stroke="#ddd" stroke-width="1.2"/>
<rect x="2732" y="1727" width="8" height="17" fill="#bbb" rx="1"/>
<line x1="2809" y1="1735.5" x2="2821" y2="1735.5" stroke="#ddd" stroke-width="1.4"/>
<line x1="2815" y1="1729.5" x2="2815" y2="1741.5" stroke="#ddd" stroke-width="1.4"/>
<text x="2840" y="1741" font-size="16" fill="#f0f0f0" textLength="40" lengthAdjust="spacingAndGlyphs">140%</text>
</svg></body></html>
